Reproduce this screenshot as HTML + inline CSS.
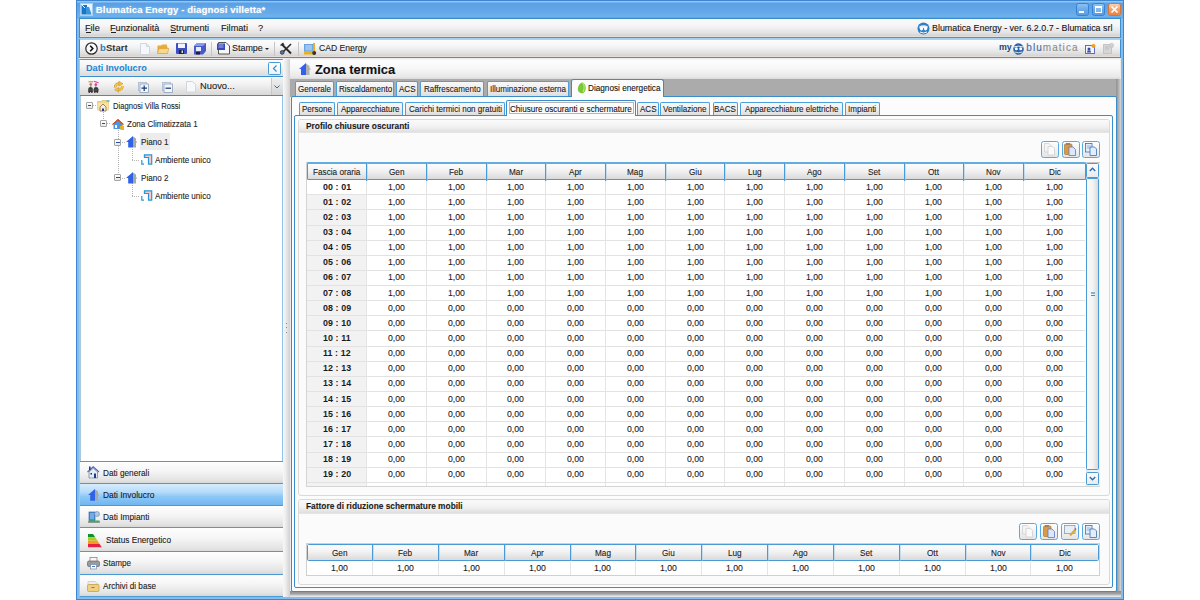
<!DOCTYPE html><html><head><meta charset="utf-8"><style>

*{box-sizing:border-box}
html,body{margin:0;padding:0;width:1200px;height:600px;overflow:hidden;background:#fff;font-family:"Liberation Sans",sans-serif;font-size:9px;color:#1a1a1a}
.ab{position:absolute;overflow:visible}
.t{position:absolute;white-space:nowrap;line-height:1;transform-origin:0 0;-webkit-text-stroke:0.1px currentColor}
.b{font-weight:bold}
.gradw{background:linear-gradient(#fdfdfd,#f3f3f3 45%,#dcdcdc)}

</style></head><body>
<div class="ab" style="left:76px;top:0;width:1048px;height:600px;background:#5fa4e6;border:1px solid #3d86d2"></div>
<div class="ab" style="left:77px;top:1px;width:1046px;height:17px;background:linear-gradient(#92c6f2 0,#92c6f2 1px,#5a9fe5 2px,#66aaea 12px,#70b3ee 16px,#4a94dc 17px)"></div>
<div class="ab" style="left:77px;top:18px;width:1046px;height:581px;background:#84bcee"></div>
<svg class="ab" style="left:80px;top:3px;" width="13" height="13" viewBox="0 0 13 13"><rect x="0.5" y="0.5" width="12" height="12" fill="#eaf3fb" stroke="#a9cdee"/><path d="M1.5 2 L7 2 L7 6 L11.5 11.5 L1.5 11.5 Z" fill="#1677c8"/><path d="M6 4 L9 4 L11.5 11 L6 11 Z" fill="#3a95dc"/><path d="M2 2 L5 5" stroke="#fff" stroke-width="1"/></svg>
<div class="t" style="left:95.85px;top:4.74px;font-size:9.6px;font-weight:bold;color:#fff;transform:scaleX(1.000);text-shadow:0 0 2px #a8d6ff;-webkit-text-stroke:0;letter-spacing:0.1px">Blumatica Energy - diagnosi villetta*</div>
<div class="ab" style="left:1076px;top:3px;width:13.4px;height:13.2px;border:1px solid #3c80d0;border-radius:2.5px;background:linear-gradient(#8cc2f2,#6aaaea 50%,#5a9ce2)"></div>
<div class="ab" style="left:1091.7px;top:3px;width:13.4px;height:13.2px;border:1px solid #3c80d0;border-radius:2.5px;background:linear-gradient(#8cc2f2,#6aaaea 50%,#5a9ce2)"></div>
<div class="ab" style="left:1107.6px;top:3px;width:13.4px;height:13.2px;border:1px solid #d0783c;border-radius:2.5px;background:linear-gradient(#fbd2b0,#f2a068 50%,#ec8440)"></div>
<div class="ab" style="left:1079.2px;top:11.3px;width:5px;height:1.7px;background:#fff"></div>
<div class="ab" style="left:1095px;top:6.1px;width:7px;height:6.8px;border:1px solid #fff;border-top-width:2px;background:rgba(255,255,255,0.15)"></div>
<svg class="ab" style="left:1110px;top:5px;" width="9" height="9" viewBox="0 0 9 9"><path d="M1.5 1.5 L7.5 7.5 M7.5 1.5 L1.5 7.5" stroke="#fff" stroke-width="1.7"/></svg>
<div class="ab" style="left:79px;top:17.7px;width:1042px;height:20.3px;border:1px solid #3a8fd0;border-bottom-color:#4494c8;background:linear-gradient(#fafafa,#f6f6f6 35%,#e4e4e4 75%,#d6d6d6 92%,#ece2dc)"></div>
<div class="t" style="left:85.10px;top:22.68px;font-size:9.5px;color:#151515;transform:scaleX(0.962);">File</div>
<div class="t" style="left:109.80px;top:22.68px;font-size:9.5px;color:#151515;transform:scaleX(0.962);">Funzionalità</div>
<div class="t" style="left:169.90px;top:22.68px;font-size:9.5px;color:#151515;transform:scaleX(0.962);">Strumenti</div>
<div class="t" style="left:220.60px;top:22.68px;font-size:9.5px;color:#151515;transform:scaleX(0.962);">Filmati</div>
<div class="t" style="left:258.40px;top:22.68px;font-size:9.5px;color:#151515;transform:scaleX(0.962);">?</div>
<div class="ab" style="left:86px;top:32.2px;width:4.5px;height:1px;background:#222"></div>
<div class="ab" style="left:111px;top:32.2px;width:5px;height:1px;background:#222"></div>
<div class="ab" style="left:171px;top:32.2px;width:5px;height:1px;background:#222"></div>
<svg class="ab" style="left:917px;top:21.5px;" width="13" height="13" viewBox="0 0 13 13"><circle cx="6.5" cy="6.5" r="6" fill="#2e7fca"/><path d="M2.4 4.2 Q6.5 2.2 10.6 4.2 L10.6 6.5 Q6.5 5.5 2.4 6.5 Z" fill="#fff" opacity="0.9"/><circle cx="4.5" cy="6.8" r="1.6" fill="#fff"/><circle cx="8.5" cy="6.8" r="1.6" fill="#fff"/><path d="M3 10 Q6.5 12 10 10" stroke="#fff" stroke-width="1" fill="none"/></svg>
<div class="t" style="left:932.10px;top:22.93px;font-size:9.5px;color:#151515;transform:scaleX(0.936);">Blumatica Energy - ver. 6.2.0.7 - Blumatica srl</div>
<div class="ab" style="left:79px;top:38px;width:1042px;height:20px;border:1px solid #3e8ed2;border-top:2px solid #a6d2ee;border-bottom-color:#4494c8;background:linear-gradient(#fcfcfc,#f6f6f6 35%,#e2e2e2 75%,#d6d6d6 92%,#ece2dc)"></div>
<svg class="ab" style="left:84.5px;top:41.5px;" width="13" height="13" viewBox="0 0 13 13"><circle cx="6.5" cy="6.5" r="5.7" fill="#fafafa" stroke="#2a2a2a" stroke-width="1.2"/><path d="M5.2 3.8 L7.8 6.5 L5.2 9.2" stroke="#111" stroke-width="1.6" fill="none"/></svg>
<div class="t" style="left:100.10px;top:43.42px;font-size:9.5px;font-weight:bold;color:#333;transform:scaleX(1.000);-webkit-text-stroke:0"><span style="color:#2a7ac6">b</span>Start</div>
<svg class="ab" style="left:140px;top:42.5px;" width="10" height="12" viewBox="0 0 10 12"><path d="M0.5 0.5 L6.5 0.5 L9.5 3.5 L9.5 11.5 L0.5 11.5 Z" fill="#f4f8fc" stroke="#cfd6de"/><path d="M6.5 0.5 L6.5 3.5 L9.5 3.5" fill="#e0e6ee" stroke="#cfd6de"/></svg>
<svg class="ab" style="left:157px;top:43.5px;" width="12" height="10" viewBox="0 0 12 10"><path d="M0.5 1.5 L4 1.5 L5 0.5 L10 0.5 L10 3 L0.5 3 Z" fill="#e8b040"/><path d="M0.5 2.5 L10.5 2.5 L10.5 9.5 L0.5 9.5 Z" fill="#e9a93a"/><path d="M2 4.5 L11.8 4.5 L10.5 9.5 L0.5 9.5 Z" fill="#f8d888" stroke="#d89830" stroke-width="0.6"/></svg>
<svg class="ab" style="left:175.8px;top:43px;" width="11" height="11" viewBox="0 0 11 11"><rect x="0" y="0" width="11" height="11" rx="1" fill="#3d4fc0"/><rect x="2" y="0.5" width="7" height="4.5" fill="#f2f4ff"/><rect x="3" y="7" width="5" height="4" fill="#202040"/><rect x="5.5" y="7.5" width="1.5" height="2.5" fill="#ddd"/></svg>
<svg class="ab" style="left:193.5px;top:42.5px;" width="12" height="12" viewBox="0 0 12 12"><path d="M3 0 L12 0 L12 8 L9 11.5 L0 11.5 L0 3 Z" fill="#4a58c8"/><path d="M3 0 L12 0 L9 3 L0 3 Z" fill="#8a98f0"/><rect x="2" y="4" width="5" height="4" fill="#e8ecff"/><rect x="2" y="9" width="4" height="2.5" fill="#202040"/></svg>
<div class="ab" style="left:210.5px;top:42px;width:1px;height:14px;background:#c4c4c4"></div>
<svg class="ab" style="left:217px;top:42.3px;" width="13" height="12.5" viewBox="0 0 13 12.5"><path d="M1.5 0.5 L9 0.5 L12.5 4 L12.5 12 L1.5 12 Z" fill="#f8f8f8" stroke="#555" stroke-width="1"/><rect x="0" y="1.5" width="8" height="6.5" fill="#3848b8"/><path d="M1.5 3 L6.5 3 M1.5 5 L6.5 5" stroke="#c8d0f8" stroke-width="0.8"/></svg>
<div class="t" style="left:232.10px;top:43.33px;font-size:9.5px;color:#1a1a1a;transform:scaleX(0.941);">Stampe</div>
<div class="ab" style="left:265px;top:47.8px;width:0;height:0;border-left:2px solid transparent;border-right:2px solid transparent;border-top:2.5px solid #222"></div>
<div class="ab" style="left:273.5px;top:42px;width:1px;height:14px;background:#c4c4c4"></div>
<svg class="ab" style="left:279.5px;top:43px;" width="12.5" height="11.5" viewBox="0 0 12.5 11.5"><path d="M1.5 1 L11 10.5" stroke="#2a2a2a" stroke-width="2"/><path d="M11 1 L2 10" stroke="#2a2a2a" stroke-width="1.6"/><circle cx="2.2" cy="9.4" r="1.9" fill="#4a7ab0" stroke="#222" stroke-width="0.7"/><path d="M0.5 2.5 L3 0.5 L4 2" stroke="#333" stroke-width="1.2" fill="none"/></svg>
<div class="ab" style="left:297.5px;top:42px;width:1px;height:14px;background:#c4c4c4"></div>
<svg class="ab" style="left:303.8px;top:42.5px;" width="12.5" height="12" viewBox="0 0 12.5 12"><rect x="0" y="1" width="9.5" height="8" fill="#6aa2e0"/><rect x="1.2" y="2" width="7" height="5.5" fill="#9cc4ee"/><rect x="0" y="8" width="9.5" height="3.5" fill="#e8b020"/><rect x="9" y="0" width="2" height="9" fill="#e8b020"/><circle cx="10.2" cy="10" r="2" fill="#333"/></svg>
<div class="t" style="left:319.30px;top:43.33px;font-size:9.5px;color:#1a1a1a;transform:scaleX(0.906);">CAD Energy</div>
<div class="t" style="left:998.90px;top:43.30px;font-size:9.3px;font-weight:bold;color:#24487e;transform:scaleX(0.949);-webkit-text-stroke:0">my</div>
<svg class="ab" style="left:1012.8px;top:42.5px;" width="11" height="12" viewBox="0 0 11 12"><ellipse cx="5.5" cy="6" rx="5.3" ry="5.8" fill="#2a62a8"/><circle cx="3.3" cy="5.8" r="1.5" fill="#fff"/><circle cx="7.7" cy="5.8" r="1.5" fill="#fff"/><path d="M0.5 4 Q5.5 2.3 10.5 4" stroke="#fff" stroke-width="0.9" fill="none"/><path d="M1.5 9 Q5.5 10.5 9.5 9" stroke="#fff" stroke-width="0.8" fill="none"/></svg>
<div class="t" style="left:1026.3px;top:42.8px;font-size:10px;line-height:10px;color:#3a6aa6;letter-spacing:1.05px;-webkit-text-stroke:0.1px currentColor">blu<span style="color:#8c8c8c">matica</span></div>
<svg class="ab" style="left:1085px;top:43.5px;" width="11" height="10" viewBox="0 0 11 10"><rect x="0.5" y="1.5" width="9" height="8" fill="#f0f4fc" stroke="#5a70b8"/><circle cx="4" cy="5" r="1.5" fill="#3a4aa0"/><path d="M2 8.5 L6 8.5 L5.5 6.5 L2.5 6.5 Z" fill="#3a4aa0"/><circle cx="8.5" cy="2" r="2" fill="#f0a020"/></svg>
<svg class="ab" style="left:1103.3px;top:43px;" width="11" height="11" viewBox="0 0 11 11"><rect x="0.5" y="1.5" width="8" height="9" fill="#d6d6d6" stroke="#c4c4c4"/><circle cx="8.5" cy="2.5" r="2.2" fill="#d0d0d0" stroke="#bbb" stroke-width="0.5"/><path d="M2 4 L6 4 M2 6 L6 6" stroke="#bbb"/></svg>
<div class="ab" style="left:79px;top:58px;width:1042px;height:539px;background:#ececec"></div>
<div class="ab" style="left:78.5px;top:58.8px;width:204.7px;height:538px;background:#fff;border:1px solid #4a9ad6;border-left:2px solid #a8c8e0;border-right-color:#8ec4ec"></div>
<div class="ab" style="left:80px;top:59.6px;width:202.5px;height:17px;background:linear-gradient(#fcfcfc,#f4f4f4 40%,#dcdcdc 95%,#e8e0dc);border-bottom:1px solid #3a8fd0"></div>
<div class="t" style="left:85.60px;top:63.89px;font-size:9.3px;font-weight:bold;color:#2486d4;transform:scaleX(0.981);-webkit-text-stroke:0.05px currentColor">Dati Involucro</div>
<div class="ab" style="left:267.5px;top:61.5px;width:13.5px;height:13px;border:1px solid #4a9ad6;border-radius:1.5px;background:linear-gradient(#fdfdfd,#eef2f6)"></div>
<svg class="ab" style="left:271.5px;top:64.5px;" width="6" height="7" viewBox="0 0 6 7"><path d="M4.5 0.5 L1.5 3.5 L4.5 6.5" stroke="#3a8ad0" stroke-width="1.2" fill="none"/></svg>
<div class="ab" style="left:80px;top:77px;width:202.5px;height:18.5px;background:linear-gradient(#fdfdfd,#f2f2f2 40%,#dadada 95%);border-bottom:1px solid #3a8fd0"></div>
<div class="ab" style="left:271px;top:77.5px;width:11.5px;height:17px;background:linear-gradient(#f0f0f0,#d4d4d4);border-left:1px solid #c0c8d0"></div>
<svg class="ab" style="left:274px;top:84.5px;" width="6" height="4" viewBox="0 0 6 4"><path d="M0.5 0.5 L3 3 L5.5 0.5" stroke="#3a6aa0" stroke-width="1" fill="none"/></svg>
<svg class="ab" style="left:88px;top:80.5px;" width="11" height="12" viewBox="0 0 11 12"><path d="M0.5 0.8 L5 0.8" stroke="#f07a30" stroke-width="1.1"/><path d="M5.8 0.3 L10.5 1.8" stroke="#e8389a" stroke-width="1.1"/><circle cx="2.8" cy="3.3" r="1.3" fill="#f07a30"/><circle cx="7.8" cy="3.6" r="1.3" fill="#e8389a"/><path d="M2.8 3 L2.8 6 M7.8 3 L7.8 6" stroke="#777" stroke-width="0.8"/><path d="M0.3 11 L0.3 7.8 Q0.3 6 2.5 6 Q4.8 6 4.8 7.8 L4.8 11 M5.8 11 L5.8 7.8 Q5.8 6 8 6 Q10.3 6 10.3 7.8 L10.3 11" fill="#3a3a3a"/><path d="M0 9 L11 9" stroke="#555" stroke-width="1"/><circle cx="1.3" cy="11" r="0.9" fill="#333"/><circle cx="3.8" cy="11" r="0.9" fill="#333"/><circle cx="6.8" cy="11" r="0.9" fill="#333"/><circle cx="9.3" cy="11" r="0.9" fill="#333"/></svg>
<svg class="ab" style="left:113px;top:81px;" width="11.5" height="11.5" viewBox="0 0 11.5 11.5"><path d="M2.2 6.5 Q2 2.8 6.2 2.6" stroke="#c8901a" stroke-width="2.6" fill="none"/><path d="M2.2 6.5 Q2 2.8 6.2 2.6" stroke="#f4c84a" stroke-width="1.6" fill="none"/><path d="M5.8 0.2 L10 2.8 L5.8 5.2 Z" fill="#f0c040" stroke="#c8901a" stroke-width="0.5"/><path d="M9.3 5 Q9.5 8.7 5.3 8.9" stroke="#c8901a" stroke-width="2.6" fill="none"/><path d="M9.3 5 Q9.5 8.7 5.3 8.9" stroke="#f4c84a" stroke-width="1.6" fill="none"/><path d="M5.7 6.3 L1.5 8.7 L5.7 11.3 Z" fill="#f0c040" stroke="#c8901a" stroke-width="0.5"/></svg>
<svg class="ab" style="left:137.5px;top:81.5px;" width="11" height="11" viewBox="0 0 11 11"><rect x="0.5" y="0.5" width="8" height="8" fill="#e0e8f4" stroke="#a8b8d0" stroke-width="0.8"/><rect x="2" y="2" width="8.5" height="8.5" fill="#f2f6fb" stroke="#8aa0c0" stroke-width="0.8"/><path d="M6.2 3.5 L6.2 9 M3.5 6.2 L9 6.2" stroke="#1a3a6a" stroke-width="1.2"/></svg>
<svg class="ab" style="left:161.5px;top:81.5px;" width="11" height="11" viewBox="0 0 11 11"><rect x="0.5" y="0.5" width="8" height="8" fill="#e0e8f4" stroke="#a8b8d0" stroke-width="0.8"/><rect x="2" y="2" width="8.5" height="8.5" fill="#f2f6fb" stroke="#8aa0c0" stroke-width="0.8"/><path d="M3.5 6.2 L9 6.2" stroke="#1a3a6a" stroke-width="1.2"/></svg>
<svg class="ab" style="left:186px;top:81px;" width="10" height="12" viewBox="0 0 10 12"><path d="M0.5 0.5 L6.5 0.5 L9.5 3.5 L9.5 11 L0.5 11 Z" fill="#f6f9fc" stroke="#d0d6de"/></svg>
<div class="t" style="left:199.80px;top:80.67px;font-size:9.8px;color:#1a1a1a;transform:scaleX(0.954);">Nuovo...</div>
<div class="ab" style="left:103px;top:110px;width:1px;height:9px;background:repeating-linear-gradient(#b4b4b4 0 1px,transparent 1px 2px)"></div>
<div class="ab" style="left:118px;top:128px;width:1px;height:49px;background:repeating-linear-gradient(#b4b4b4 0 1px,transparent 1px 2px)"></div>
<div class="ab" style="left:132px;top:149px;width:1px;height:11px;background:repeating-linear-gradient(#b4b4b4 0 1px,transparent 1px 2px)"></div>
<div class="ab" style="left:132px;top:160px;width:8px;height:1px;background:repeating-linear-gradient(90deg,#b4b4b4 0 1px,transparent 1px 2px)"></div>
<div class="ab" style="left:132px;top:181px;width:1px;height:15px;background:repeating-linear-gradient(#b4b4b4 0 1px,transparent 1px 2px)"></div>
<div class="ab" style="left:132px;top:196px;width:8px;height:1px;background:repeating-linear-gradient(90deg,#b4b4b4 0 1px,transparent 1px 2px)"></div>
<div class="ab" style="left:93px;top:105px;width:4px;height:1px;background:repeating-linear-gradient(90deg,#b4b4b4 0 1px,transparent 1px 2px)"></div>
<div class="ab" style="left:107px;top:123px;width:4px;height:1px;background:repeating-linear-gradient(90deg,#b4b4b4 0 1px,transparent 1px 2px)"></div>
<div class="ab" style="left:122px;top:141.5px;width:4px;height:1px;background:repeating-linear-gradient(90deg,#b4b4b4 0 1px,transparent 1px 2px)"></div>
<div class="ab" style="left:122px;top:177.5px;width:4px;height:1px;background:repeating-linear-gradient(90deg,#b4b4b4 0 1px,transparent 1px 2px)"></div>
<div class="ab" style="left:85.9px;top:101.7px;width:7px;height:7px;border:1px solid #a4a4a4;border-radius:1px;background:linear-gradient(#fff,#e8e8e8)"></div><div class="ab" style="left:87.60000000000001px;top:104.7px;width:3.6px;height:1.2px;background:#2a4a9a"></div>
<div class="ab" style="left:99.9px;top:119.8px;width:7px;height:7px;border:1px solid #a4a4a4;border-radius:1px;background:linear-gradient(#fff,#e8e8e8)"></div><div class="ab" style="left:101.60000000000001px;top:122.8px;width:3.6px;height:1.2px;background:#2a4a9a"></div>
<div class="ab" style="left:114.4px;top:138.5px;width:7px;height:7px;border:1px solid #a4a4a4;border-radius:1px;background:linear-gradient(#fff,#e8e8e8)"></div><div class="ab" style="left:116.10000000000001px;top:141.5px;width:3.6px;height:1.2px;background:#2a4a9a"></div>
<div class="ab" style="left:114.4px;top:174.3px;width:7px;height:7px;border:1px solid #a4a4a4;border-radius:1px;background:linear-gradient(#fff,#e8e8e8)"></div><div class="ab" style="left:116.10000000000001px;top:177.3px;width:3.6px;height:1.2px;background:#2a4a9a"></div>
<svg class="ab" style="left:96.8px;top:100px;" width="12.5" height="11.5" viewBox="0 0 12.5 11.5"><path d="M0.5 1.5 L4 1.5 L5 0.5 L11.5 0.5 L11.5 10 L0.5 10 Z" fill="#f0d890" stroke="#d8b060" stroke-width="0.6"/><path d="M0.5 3 L11.5 3 L11.5 10 L0.5 10 Z" fill="#f6e2a6"/><rect x="9.5" y="0" width="3" height="2" fill="#6ac8c8"/><path d="M3 7 L6 4 L9 7 L9 11 L3 11 Z" fill="#f4f0e0" stroke="#8a6a30" stroke-width="0.8"/><rect x="5" y="8.5" width="2" height="2.5" fill="#2a3a8a"/></svg>
<svg class="ab" style="left:111.7px;top:117.6px;" width="12" height="12" viewBox="0 0 12 12"><path d="M0.5 6 L6 1 L11.5 6" fill="#d84a1a"/><path d="M1.5 6 L6 2 L10.5 6 L10.5 11 L1.5 11 Z" fill="#4a98e0"/><path d="M0 6.5 L6 1 L12 6.5 L11 7 L6 2.5 L1 7 Z" fill="#d84a1a"/><rect x="3" y="7" width="2" height="3" fill="#fff"/><path d="M8 8 L12 8 L12 12 L8.5 12 Z" fill="#f0b020"/></svg>
<svg class="ab" style="left:126px;top:135.6px;" width="11.5" height="11.5" viewBox="0 0 11.5 11.5"><path d="M7 0 L7 11.5 L2.2 11.5 L2.2 6 L0 6 Z" fill="#2f62e6"/><path d="M7 0.5 L10 2.5 L10 5 L11.3 6 L10 7 L10 11.5 L7 11.5 Z" fill="#a8a8a8"/></svg>
<svg class="ab" style="left:126px;top:171.8px;" width="11.5" height="11.5" viewBox="0 0 11.5 11.5"><path d="M7 0 L7 11.5 L2.2 11.5 L2.2 6 L0 6 Z" fill="#2f62e6"/><path d="M7 0.5 L10 2.5 L10 5 L11.3 6 L10 7 L10 11.5 L7 11.5 Z" fill="#a8a8a8"/></svg>
<svg class="ab" style="left:140.6px;top:154.2px;" width="11.5" height="11" viewBox="0 0 11.5 11"><path d="M3.5 0.8 L10.7 0.8 L10.7 10.2 L7.5 10.2 L7.5 3.5 L3.5 3.5 Z" fill="#f2cccc" stroke="#2a98d8" stroke-width="1.2"/><path d="M3.5 0.8 L3.5 3.5 M0.8 6 L0.8 10.2 L3 10.2" stroke="#2a98d8" stroke-width="1.2" fill="none"/></svg>
<svg class="ab" style="left:140.6px;top:190.2px;" width="11.5" height="11" viewBox="0 0 11.5 11"><path d="M3.5 0.8 L10.7 0.8 L10.7 10.2 L7.5 10.2 L7.5 3.5 L3.5 3.5 Z" fill="#f2cccc" stroke="#2a98d8" stroke-width="1.2"/><path d="M3.5 0.8 L3.5 3.5 M0.8 6 L0.8 10.2 L3 10.2" stroke="#2a98d8" stroke-width="1.2" fill="none"/></svg>
<div class="ab" style="left:140px;top:132.5px;width:29.5px;height:17.5px;background:#ececec"></div>
<div class="t" style="left:112.60px;top:101.53px;font-size:8.9px;color:#1e1e1e;transform:scaleX(0.860);">Diagnosi Villa Rossi</div>
<div class="t" style="left:126.60px;top:119.53px;font-size:8.9px;color:#1e1e1e;transform:scaleX(0.900);">Zona Climatizzata 1</div>
<div class="t" style="left:141.10px;top:137.73px;font-size:8.9px;color:#1e1e1e;transform:scaleX(0.911);">Piano 1</div>
<div class="t" style="left:155.40px;top:155.73px;font-size:8.9px;color:#1e1e1e;transform:scaleX(0.910);">Ambiente unico</div>
<div class="t" style="left:141.10px;top:173.84px;font-size:8.9px;color:#1e1e1e;transform:scaleX(0.911);">Piano 2</div>
<div class="t" style="left:155.40px;top:191.94px;font-size:8.9px;color:#1e1e1e;transform:scaleX(0.910);">Ambiente unico</div>
<div class="ab" style="left:80px;top:460.8px;width:202.5px;height:22.69999999999999px;background:linear-gradient(#fefefe,#f6f6f6 40%,#e4e4e4 85%,#d8d8d8);border-top:1.2px solid #4a9ad6"></div>
<div class="t" style="left:103.30px;top:468.95px;font-size:9px;color:#1a1a1a;transform:scaleX(0.916);">Dati generali</div>
<div class="ab" style="left:80px;top:483.0px;width:202.5px;height:22.30000000000001px;background:linear-gradient(#d6ecfd,#b4dafa 40%,#8cc8f6 60%,#70b6f0);border-top:1.2px solid #4a9ad6"></div>
<div class="t" style="left:103.30px;top:490.95px;font-size:9px;color:#1a1a1a;transform:scaleX(0.934);">Dati Involucro</div>
<div class="ab" style="left:80px;top:504.8px;width:202.5px;height:22.69999999999999px;background:linear-gradient(#fefefe,#f6f6f6 40%,#e4e4e4 85%,#d8d8d8);border-top:1.2px solid #4a9ad6"></div>
<div class="t" style="left:103.30px;top:512.85px;font-size:9px;color:#1a1a1a;transform:scaleX(0.926);">Dati Impianti</div>
<div class="ab" style="left:80px;top:527.0px;width:202.5px;height:24.899999999999977px;background:linear-gradient(#fefefe,#f6f6f6 40%,#e4e4e4 85%,#d8d8d8);border-top:1.2px solid #4a9ad6"></div>
<div class="t" style="left:106.20px;top:536.15px;font-size:9px;color:#1a1a1a;transform:scaleX(0.915);">Status Energetico</div>
<div class="ab" style="left:80px;top:551.4px;width:202.5px;height:22.700000000000045px;background:linear-gradient(#fefefe,#f6f6f6 40%,#e4e4e4 85%,#d8d8d8);border-top:1.2px solid #4a9ad6"></div>
<div class="t" style="left:103.30px;top:559.45px;font-size:9px;color:#1a1a1a;transform:scaleX(0.900);">Stampe</div>
<div class="ab" style="left:80px;top:573.6px;width:202.5px;height:22.699999999999932px;background:linear-gradient(#fefefe,#f6f6f6 40%,#e4e4e4 85%,#d8d8d8);border-top:1.2px solid #4a9ad6"></div>
<div class="t" style="left:103.30px;top:581.65px;font-size:9px;color:#1a1a1a;transform:scaleX(0.906);">Archivi di base</div>
<div class="ab" style="left:80px;top:596px;width:202.5px;height:1px;background:#4a9ad6"></div>
<svg class="ab" style="left:87px;top:466.4px;" width="12.5" height="12.5" viewBox="0 0 12.5 12.5"><path d="M0.5 6 L6.2 0.8 L12 6" stroke="#4a6ab8" stroke-width="1.2" fill="none"/><path d="M2 6 L6.2 2.2 L10.5 6 L10.5 12 L2 12 Z" fill="#e6ecf4" stroke="#6a7a98" stroke-width="0.7"/><rect x="2" y="0.5" width="1.6" height="3.5" fill="#2a3a8a"/><rect x="7" y="7.5" width="2" height="4.5" fill="#1a3a8a"/><rect x="3.5" y="7" width="1.5" height="1.5" fill="#1a2a6a"/></svg>
<svg class="ab" style="left:87.6px;top:488.6px;" width="11.5" height="11.8" viewBox="0 0 11.5 11.8"><path d="M7 0 L7 11.8 L2.2 11.8 L2.2 6 L0 6 Z" fill="#2f62e6"/><path d="M7 0.5 L10 2.5 L10 5 L11.3 6 L10 7 L10 11.8 L7 11.8 Z" fill="#a8a8a8"/></svg>
<svg class="ab" style="left:87.5px;top:511px;" width="12" height="12" viewBox="0 0 12 12"><rect x="1" y="1" width="6" height="8.5" fill="#4a90d8" stroke="#2a5aa0" stroke-width="0.6"/><path d="M2 3 L6 3 M2 5 L6 5 M2 7 L6 7" stroke="#c8e0f8" stroke-width="0.7"/><circle cx="9" cy="3" r="2.5" fill="#b0c8e0" stroke="#6a88b0" stroke-width="0.6"/><rect x="0.5" y="9.5" width="11" height="2" fill="#30b050"/><rect x="0" y="10.5" width="12" height="1.2" fill="#888"/></svg>
<svg class="ab" style="left:88px;top:533.7px;" width="14" height="13.3" viewBox="0 0 14 13.3"><path d="M0 0 L5 0 L7.2 3.3 L0 3.3 Z" fill="#109030"/><path d="M0 3.3 L7.2 3.3 L9.4 6.6 L0 6.6 Z" fill="#a8d020"/><path d="M0 6.6 L9.4 6.6 L11.6 9.9 L0 9.9 Z" fill="#f0a020"/><path d="M0 9.9 L11.6 9.9 L13.8 13.3 L0 13.3 Z" fill="#e82040"/></svg>
<svg class="ab" style="left:86.9px;top:556.9px;" width="13" height="12.5" viewBox="0 0 13 12.5"><rect x="3" y="0.5" width="7" height="4" fill="#f8f8f8" stroke="#888" stroke-width="0.8"/><rect x="0.5" y="4" width="12" height="5.5" rx="1.5" fill="#9a9a9a" stroke="#666" stroke-width="0.7"/><rect x="3.5" y="7.5" width="6" height="4.5" fill="#fafafa" stroke="#7a8aa8" stroke-width="0.7"/><rect x="5" y="9" width="3" height="1" fill="#4a7ac0"/></svg>
<svg class="ab" style="left:87.2px;top:580.5px;" width="12.5" height="11" viewBox="0 0 12.5 11"><path d="M1 0.5 L8 0.5 L11 3 L11 4 L1 4 Z" fill="#e8eef4" stroke="#b8c0c8" stroke-width="0.6"/><rect x="0.5" y="3.5" width="11.5" height="7" rx="1" fill="#f0d080" stroke="#c8a050" stroke-width="0.8"/><rect x="4.5" y="6" width="3" height="1" fill="#a07830"/></svg>
<div class="ab" style="left:283.3px;top:59px;width:6.8px;height:538px;background:linear-gradient(90deg,#f8f8f8,#ececec 40%,#d0d0d0)"></div>
<div class="ab" style="left:285.8px;top:322.5px;width:1.3px;height:1.3px;background:#8a8a8a"></div>
<div class="ab" style="left:285.8px;top:327px;width:1.3px;height:1.3px;background:#8a8a8a"></div>
<div class="ab" style="left:285.8px;top:331.5px;width:1.3px;height:1.3px;background:#8a8a8a"></div>
<div class="ab" style="left:290px;top:59px;width:830px;height:20px;background:linear-gradient(#f0ecea 0,#fdfdfd 1px,#f6f6f6 50%,#e8e8e8 90%,#d8d8d8)"></div>
<svg class="ab" style="left:299px;top:62.8px;" width="12.5" height="12.2" viewBox="0 0 12.5 12.2"><path d="M7 0 L7 12 L2 12 L2 6 L0 6 Z" fill="#3060f0"/><path d="M7 0.5 L10.5 3 L10.5 5 L12 6 L10.5 7 L10.5 12 L7 12 Z" fill="#b0b0b0"/></svg>
<div class="t" style="left:314.60px;top:62.95px;font-size:13px;font-weight:bold;color:#111;transform:scaleX(0.990);">Zona termica</div>
<div class="ab" style="left:290px;top:79px;width:830px;height:18px;background:#ababab"></div>
<div class="ab" style="left:1116px;top:79px;width:5px;height:517px;background:linear-gradient(90deg,#909090,#a8a8a8 40%,#c8c8c8 80%,#d8d8d8)"></div>
<div class="ab" style="left:290px;top:591px;width:831px;height:6px;background:linear-gradient(#8a8a8a,#a4a4a4 50%,#dcdcdc 80%,#ececec)"></div>
<div class="ab" style="left:290.5px;top:95.6px;width:826px;height:496.2px;background:#fcfcfc;border:1.3px solid #3a8cca;border-radius:2px"></div>
<div class="ab" style="left:295.4px;top:81.2px;width:39.0px;height:14.6px;background:linear-gradient(#f8f8f8,#eeeeee 50%,#dedede);border:1.2px solid #4aa0dc;border-bottom:none;border-radius:2px 2px 0 0"></div>
<div class="t" style="left:298.35px;top:84.50px;font-size:9.3px;color:#1a1a1a;transform:scaleX(0.865);">Generale</div>
<div class="ab" style="left:336.2px;top:81.2px;width:58.19999999999999px;height:14.6px;background:linear-gradient(#f8f8f8,#eeeeee 50%,#dedede);border:1.2px solid #4aa0dc;border-bottom:none;border-radius:2px 2px 0 0"></div>
<div class="t" style="left:338.70px;top:84.50px;font-size:9.3px;color:#1a1a1a;transform:scaleX(0.865);">Riscaldamento</div>
<div class="ab" style="left:396.2px;top:81.2px;width:22.19999999999999px;height:14.6px;background:linear-gradient(#f8f8f8,#eeeeee 50%,#dedede);border:1.2px solid #4aa0dc;border-bottom:none;border-radius:2px 2px 0 0"></div>
<div class="t" style="left:399.03px;top:84.50px;font-size:9.3px;color:#1a1a1a;transform:scaleX(0.865);">ACS</div>
<div class="ab" style="left:420.2px;top:81.2px;width:63.80000000000001px;height:14.6px;background:linear-gradient(#f8f8f8,#eeeeee 50%,#dedede);border:1.2px solid #4aa0dc;border-bottom:none;border-radius:2px 2px 0 0"></div>
<div class="t" style="left:423.78px;top:84.50px;font-size:9.3px;color:#1a1a1a;transform:scaleX(0.865);">Raffrescamento</div>
<div class="ab" style="left:486.5px;top:81.2px;width:82.79999999999995px;height:14.6px;background:linear-gradient(#f8f8f8,#eeeeee 50%,#dedede);border:1.2px solid #4aa0dc;border-bottom:none;border-radius:2px 2px 0 0"></div>
<div class="t" style="left:489.89px;top:84.50px;font-size:9.3px;color:#1a1a1a;transform:scaleX(0.865);">Illuminazione esterna</div>
<div class="ab" style="left:570.8px;top:78.6px;width:93.6px;height:18.6px;background:#fcfcfc;border:1.3px solid #3a8cca;border-bottom:none;border-radius:2.5px 2.5px 0 0"></div>
<svg class="ab" style="left:576.5px;top:81.8px;" width="10" height="12" viewBox="0 0 10 12"><path d="M5 0.5 C9.5 1.5 10 8 6.5 11 C3.5 12 0.5 10 0.8 6.5 C1.2 3 3 1 5 0.5 Z" fill="#7cc83a"/><path d="M5 0.5 C7.5 2 8 6 6 10" stroke="#b6e878" stroke-width="1.2" fill="none"/></svg>
<div class="t" style="left:587.90px;top:84.00px;font-size:9.3px;color:#111;transform:scaleX(0.882);">Diagnosi energetica</div>
<div class="ab" style="left:294px;top:114.8px;width:818.5px;height:473.5px;background:#fcfcfc;border:1.3px solid #3a8cca;border-radius:2px"></div>
<div class="ab" style="left:299.3px;top:102px;width:36.0px;height:13px;background:linear-gradient(#f8f8f8,#eeeeee 50%,#dedede);border:1.2px solid #4aa0dc;border-bottom:none;border-radius:2px 2px 0 0"></div>
<div class="t" style="left:302.32px;top:104.69px;font-size:9.3px;color:#1a1a1a;transform:scaleX(0.865);">Persone</div>
<div class="ab" style="left:337.3px;top:102px;width:65.39999999999998px;height:13px;background:linear-gradient(#f8f8f8,#eeeeee 50%,#dedede);border:1.2px solid #4aa0dc;border-bottom:none;border-radius:2px 2px 0 0"></div>
<div class="t" style="left:340.71px;top:104.69px;font-size:9.3px;color:#1a1a1a;transform:scaleX(0.865);">Apparecchiature</div>
<div class="ab" style="left:405px;top:102px;width:100px;height:13px;background:linear-gradient(#f8f8f8,#eeeeee 50%,#dedede);border:1.2px solid #4aa0dc;border-bottom:none;border-radius:2px 2px 0 0"></div>
<div class="t" style="left:408.51px;top:104.69px;font-size:9.3px;color:#1a1a1a;transform:scaleX(0.865);">Carichi termici non gratuiti</div>
<div class="ab" style="left:636.7px;top:102px;width:22.299999999999955px;height:13px;background:linear-gradient(#f8f8f8,#eeeeee 50%,#dedede);border:1.2px solid #4aa0dc;border-bottom:none;border-radius:2px 2px 0 0"></div>
<div class="t" style="left:639.58px;top:104.69px;font-size:9.3px;color:#1a1a1a;transform:scaleX(0.865);">ACS</div>
<div class="ab" style="left:660px;top:102px;width:50.200000000000045px;height:13px;background:linear-gradient(#f8f8f8,#eeeeee 50%,#dedede);border:1.2px solid #4aa0dc;border-bottom:none;border-radius:2px 2px 0 0"></div>
<div class="t" style="left:663.41px;top:104.69px;font-size:9.3px;color:#1a1a1a;transform:scaleX(0.865);">Ventilazione</div>
<div class="ab" style="left:712.5px;top:102px;width:25.200000000000045px;height:13px;background:linear-gradient(#f8f8f8,#eeeeee 50%,#dedede);border:1.2px solid #4aa0dc;border-bottom:none;border-radius:2px 2px 0 0"></div>
<div class="t" style="left:714.15px;top:104.69px;font-size:9.3px;color:#1a1a1a;transform:scaleX(0.865);">BACS</div>
<div class="ab" style="left:740px;top:102px;width:102.60000000000002px;height:13px;background:linear-gradient(#f8f8f8,#eeeeee 50%,#dedede);border:1.2px solid #4aa0dc;border-bottom:none;border-radius:2px 2px 0 0"></div>
<div class="t" style="left:744.57px;top:104.69px;font-size:9.3px;color:#1a1a1a;transform:scaleX(0.865);">Apparecchiature elettriche</div>
<div class="ab" style="left:844.5px;top:102px;width:35.10000000000002px;height:13px;background:linear-gradient(#f8f8f8,#eeeeee 50%,#dedede);border:1.2px solid #4aa0dc;border-bottom:none;border-radius:2px 2px 0 0"></div>
<div class="t" style="left:847.97px;top:104.69px;font-size:9.3px;color:#1a1a1a;transform:scaleX(0.865);">Impianti</div>
<div class="ab" style="left:506.3px;top:100px;width:129.5px;height:15.6px;background:#fcfcfc;border:1.3px solid #3a8cca;border-bottom:none;border-radius:2px 2px 0 0"></div>
<svg class="ab" style="left:509px;top:102px" width="125" height="12" viewBox="0 0 125 12"><rect x="0.5" y="0.5" width="124" height="11" fill="none" stroke="#555" stroke-width="1" stroke-dasharray="1 1" opacity="0.85"/></svg>
<div class="t" style="left:510.40px;top:104.69px;font-size:9.3px;color:#111;transform:scaleX(0.872);">Chiusure oscuranti e schermature</div>
<div class="ab" style="left:297.6px;top:118.6px;width:812.4px;height:377.70000000000005px;background:#fbfbfb;border:1px solid #dadada;border-radius:3px"></div>
<div class="ab" style="left:298.6px;top:119.6px;width:810.4px;height:13.5px;background:linear-gradient(#fafafa,#f2f2f2 50%,#e0e0e0 90%,#e8e8e8);border-radius:2px 2px 0 0"></div>
<div class="t" style="left:306.10px;top:121.55px;font-size:9px;font-weight:bold;color:#1a1a1a;transform:scaleX(0.927);">Profilo chiusure oscuranti</div>
<div class="ab" style="left:297.6px;top:499.2px;width:812.4px;height:86.09999999999997px;background:#fbfbfb;border:1px solid #dadada;border-radius:3px"></div>
<div class="ab" style="left:298.6px;top:500.2px;width:810.4px;height:13.5px;background:linear-gradient(#fafafa,#f2f2f2 50%,#e0e0e0 90%,#e8e8e8);border-radius:2px 2px 0 0"></div>
<div class="t" style="left:306.10px;top:502.15px;font-size:9px;font-weight:bold;color:#1a1a1a;transform:scaleX(0.927);">Fattore di riduzione schermature mobili</div>
<div class="ab" style="left:1040.8px;top:141.3px;width:18px;height:16.8px;border:1.5px solid #5aaae0;border-radius:2.5px;background:linear-gradient(#fdfdfd,#f0f0f0 60%,#e4e4e4)"></div>
<svg class="ab" style="left:1043.8px;top:143.3px;" width="12" height="13" viewBox="0 0 12 13"><path d="M0.5 0.5 L5 0.5 L7 2.5 L7 9 L0.5 9 Z" fill="#f4f4f4" stroke="#cfcfcf" stroke-width="0.8"/><path d="M4 3.5 L8.5 3.5 L10.5 5.5 L10.5 12 L4 12 Z" fill="#fafafa" stroke="#cfcfcf" stroke-width="0.8"/></svg>
<div class="ab" style="left:1061.6px;top:141.3px;width:18px;height:16.8px;border:1.5px solid #5aaae0;border-radius:2.5px;background:linear-gradient(#fdfdfd,#f0f0f0 60%,#e4e4e4)"></div>
<svg class="ab" style="left:1064.1px;top:143.3px;" width="13" height="13" viewBox="0 0 13 13"><rect x="0.5" y="1" width="7.5" height="10.5" rx="1" fill="#d89a48" stroke="#b07830" stroke-width="0.7"/><rect x="2" y="0" width="4" height="2" fill="#a08060"/><path d="M5 4 L9 4 L11.5 6.5 L11.5 12.5 L5 12.5 Z" fill="#dce8fa" stroke="#5a7ac8" stroke-width="0.8"/></svg>
<div class="ab" style="left:1082.4px;top:141.3px;width:18px;height:16.8px;border:1.5px solid #5aaae0;border-radius:2.5px;background:linear-gradient(#fdfdfd,#f0f0f0 60%,#e4e4e4)"></div>
<svg class="ab" style="left:1084.9px;top:143.3px;" width="13" height="13" viewBox="0 0 13 13"><rect x="0.5" y="0.5" width="6.5" height="8.5" fill="#e4eefa" stroke="#3a70b8" stroke-width="0.8"/><path d="M1.8 3 L5.5 3 M1.8 5 L5.5 5" stroke="#6a98d0" stroke-width="0.7"/><path d="M5 4 L9.5 4 L11.5 6 L11.5 12.5 L5 12.5 Z" fill="#e4eefa" stroke="#3a70b8" stroke-width="0.8"/></svg>
<div class="ab" style="left:1019px;top:522.9px;width:18px;height:16.8px;border:1.5px solid #5aaae0;border-radius:2.5px;background:linear-gradient(#fdfdfd,#f0f0f0 60%,#e4e4e4)"></div>
<svg class="ab" style="left:1022px;top:524.9px;" width="12" height="13" viewBox="0 0 12 13"><path d="M0.5 0.5 L5 0.5 L7 2.5 L7 9 L0.5 9 Z" fill="#f4f4f4" stroke="#cfcfcf" stroke-width="0.8"/><path d="M4 3.5 L8.5 3.5 L10.5 5.5 L10.5 12 L4 12 Z" fill="#fafafa" stroke="#cfcfcf" stroke-width="0.8"/></svg>
<div class="ab" style="left:1040px;top:522.9px;width:18px;height:16.8px;border:1.5px solid #5aaae0;border-radius:2.5px;background:linear-gradient(#fdfdfd,#f0f0f0 60%,#e4e4e4)"></div>
<svg class="ab" style="left:1042.5px;top:524.9px;" width="13" height="13" viewBox="0 0 13 13"><rect x="0.5" y="1" width="7.5" height="10.5" rx="1" fill="#d89a48" stroke="#b07830" stroke-width="0.7"/><rect x="2" y="0" width="4" height="2" fill="#a08060"/><path d="M5 4 L9 4 L11.5 6.5 L11.5 12.5 L5 12.5 Z" fill="#dce8fa" stroke="#5a7ac8" stroke-width="0.8"/></svg>
<div class="ab" style="left:1061px;top:522.9px;width:18px;height:16.8px;border:1.5px solid #5aaae0;border-radius:2.5px;background:linear-gradient(#fdfdfd,#f0f0f0 60%,#e4e4e4)"></div>
<svg class="ab" style="left:1063.5px;top:525.4px;" width="13" height="12" viewBox="0 0 13 12"><rect x="0.5" y="0.5" width="10.5" height="8" fill="#e6eef8" stroke="#8a9ab8" stroke-width="0.8"/><path d="M6 10.5 L11.5 4.5" stroke="#e0a830" stroke-width="2"/><path d="M11 4.5 L12 3.5" stroke="#d04040" stroke-width="1.5"/></svg>
<div class="ab" style="left:1082.3px;top:522.9px;width:18px;height:16.8px;border:1.5px solid #5aaae0;border-radius:2.5px;background:linear-gradient(#fdfdfd,#f0f0f0 60%,#e4e4e4)"></div>
<svg class="ab" style="left:1084.8px;top:524.9px;" width="13" height="13" viewBox="0 0 13 13"><rect x="0.5" y="0.5" width="6.5" height="8.5" fill="#e4eefa" stroke="#3a70b8" stroke-width="0.8"/><path d="M1.8 3 L5.5 3 M1.8 5 L5.5 5" stroke="#6a98d0" stroke-width="0.7"/><path d="M5 4 L9.5 4 L11.5 6 L11.5 12.5 L5 12.5 Z" fill="#e4eefa" stroke="#3a70b8" stroke-width="0.8"/></svg>
<div class="ab" style="left:306.3px;top:161.5px;width:794.0px;height:325.4px;background:#fff;border:1px solid #d4d4d4;border-top-color:#c8c8c8"></div>
<div class="ab" style="left:307.3px;top:194.74px;width:59.39999999999998px;height:291.26px;background:#f2f2f2"></div>
<div class="ab" style="left:307.3px;top:194px;width:778.1000000000001px;height:1px;background:#e2e2e2"></div>
<div class="ab" style="left:307.3px;top:209px;width:778.1000000000001px;height:1px;background:#e2e2e2"></div>
<div class="ab" style="left:307.3px;top:225px;width:778.1000000000001px;height:1px;background:#e2e2e2"></div>
<div class="ab" style="left:307.3px;top:240px;width:778.1000000000001px;height:1px;background:#e2e2e2"></div>
<div class="ab" style="left:307.3px;top:255px;width:778.1000000000001px;height:1px;background:#e2e2e2"></div>
<div class="ab" style="left:307.3px;top:270px;width:778.1000000000001px;height:1px;background:#e2e2e2"></div>
<div class="ab" style="left:307.3px;top:285px;width:778.1000000000001px;height:1px;background:#e2e2e2"></div>
<div class="ab" style="left:307.3px;top:300px;width:778.1000000000001px;height:1px;background:#e2e2e2"></div>
<div class="ab" style="left:307.3px;top:315px;width:778.1000000000001px;height:1px;background:#e2e2e2"></div>
<div class="ab" style="left:307.3px;top:330px;width:778.1000000000001px;height:1px;background:#e2e2e2"></div>
<div class="ab" style="left:307.3px;top:346px;width:778.1000000000001px;height:1px;background:#e2e2e2"></div>
<div class="ab" style="left:307.3px;top:361px;width:778.1000000000001px;height:1px;background:#e2e2e2"></div>
<div class="ab" style="left:307.3px;top:376px;width:778.1000000000001px;height:1px;background:#e2e2e2"></div>
<div class="ab" style="left:307.3px;top:391px;width:778.1000000000001px;height:1px;background:#e2e2e2"></div>
<div class="ab" style="left:307.3px;top:406px;width:778.1000000000001px;height:1px;background:#e2e2e2"></div>
<div class="ab" style="left:307.3px;top:421px;width:778.1000000000001px;height:1px;background:#e2e2e2"></div>
<div class="ab" style="left:307.3px;top:436px;width:778.1000000000001px;height:1px;background:#e2e2e2"></div>
<div class="ab" style="left:307.3px;top:452px;width:778.1000000000001px;height:1px;background:#e2e2e2"></div>
<div class="ab" style="left:307.3px;top:467px;width:778.1000000000001px;height:1px;background:#e2e2e2"></div>
<div class="ab" style="left:307.3px;top:482px;width:778.1000000000001px;height:1px;background:#e2e2e2"></div>
<div class="ab" style="left:366px;top:179.6px;width:1px;height:306.4px;background:#e4e4e4"></div>
<div class="ab" style="left:426px;top:179.6px;width:1px;height:306.4px;background:#e4e4e4"></div>
<div class="ab" style="left:486px;top:179.6px;width:1px;height:306.4px;background:#e4e4e4"></div>
<div class="ab" style="left:545px;top:179.6px;width:1px;height:306.4px;background:#e4e4e4"></div>
<div class="ab" style="left:605px;top:179.6px;width:1px;height:306.4px;background:#e4e4e4"></div>
<div class="ab" style="left:665px;top:179.6px;width:1px;height:306.4px;background:#e4e4e4"></div>
<div class="ab" style="left:724px;top:179.6px;width:1px;height:306.4px;background:#e4e4e4"></div>
<div class="ab" style="left:784px;top:179.6px;width:1px;height:306.4px;background:#e4e4e4"></div>
<div class="ab" style="left:844px;top:179.6px;width:1px;height:306.4px;background:#e4e4e4"></div>
<div class="ab" style="left:904px;top:179.6px;width:1px;height:306.4px;background:#e4e4e4"></div>
<div class="ab" style="left:963px;top:179.6px;width:1px;height:306.4px;background:#e4e4e4"></div>
<div class="ab" style="left:1023px;top:179.6px;width:1px;height:306.4px;background:#e4e4e4"></div>
<div class="ab" style="left:306.90000000000003px;top:162.2px;width:779.1000000000001px;height:18.1px;background:linear-gradient(#fcfcfc,#f2f2f2 45%,#dcdcdc 95%);border:1.4px solid #4a9ad6;border-top:2px solid #62ace0;border-radius:1.5px"></div>
<div class="ab" style="left:366px;top:162.5px;width:1px;height:18px;background:#4a9ad6;box-shadow:0.5px 0 0 #9ccbec"></div>
<div class="ab" style="left:426px;top:162.5px;width:1px;height:18px;background:#4a9ad6;box-shadow:0.5px 0 0 #9ccbec"></div>
<div class="ab" style="left:486px;top:162.5px;width:1px;height:18px;background:#4a9ad6;box-shadow:0.5px 0 0 #9ccbec"></div>
<div class="ab" style="left:545px;top:162.5px;width:1px;height:18px;background:#4a9ad6;box-shadow:0.5px 0 0 #9ccbec"></div>
<div class="ab" style="left:605px;top:162.5px;width:1px;height:18px;background:#4a9ad6;box-shadow:0.5px 0 0 #9ccbec"></div>
<div class="ab" style="left:665px;top:162.5px;width:1px;height:18px;background:#4a9ad6;box-shadow:0.5px 0 0 #9ccbec"></div>
<div class="ab" style="left:724px;top:162.5px;width:1px;height:18px;background:#4a9ad6;box-shadow:0.5px 0 0 #9ccbec"></div>
<div class="ab" style="left:784px;top:162.5px;width:1px;height:18px;background:#4a9ad6;box-shadow:0.5px 0 0 #9ccbec"></div>
<div class="ab" style="left:844px;top:162.5px;width:1px;height:18px;background:#4a9ad6;box-shadow:0.5px 0 0 #9ccbec"></div>
<div class="ab" style="left:904px;top:162.5px;width:1px;height:18px;background:#4a9ad6;box-shadow:0.5px 0 0 #9ccbec"></div>
<div class="ab" style="left:963px;top:162.5px;width:1px;height:18px;background:#4a9ad6;box-shadow:0.5px 0 0 #9ccbec"></div>
<div class="ab" style="left:1023px;top:162.5px;width:1px;height:18px;background:#4a9ad6;box-shadow:0.5px 0 0 #9ccbec"></div>
<div class="t" style="left:313.08px;top:167.95px;font-size:9px;color:#1a1a1a;transform:scaleX(0.910);">Fascia oraria</div>
<div class="t" style="left:388.82px;top:167.95px;font-size:9px;color:#1a1a1a;transform:scaleX(0.910);">Gen</div>
<div class="t" style="left:449.21px;top:167.95px;font-size:9px;color:#1a1a1a;transform:scaleX(0.910);">Feb</div>
<div class="t" style="left:508.92px;top:167.95px;font-size:9px;color:#1a1a1a;transform:scaleX(0.910);">Mar</div>
<div class="t" style="left:569.31px;top:167.95px;font-size:9px;color:#1a1a1a;transform:scaleX(0.910);">Apr</div>
<div class="t" style="left:627.43px;top:167.95px;font-size:9px;color:#1a1a1a;transform:scaleX(0.910);">Mag</div>
<div class="t" style="left:688.73px;top:167.95px;font-size:9px;color:#1a1a1a;transform:scaleX(0.910);">Giu</div>
<div class="t" style="left:747.98px;top:167.95px;font-size:9px;color:#1a1a1a;transform:scaleX(0.910);">Lug</div>
<div class="t" style="left:807.24px;top:167.95px;font-size:9px;color:#1a1a1a;transform:scaleX(0.910);">Ago</div>
<div class="t" style="left:868.09px;top:167.95px;font-size:9px;color:#1a1a1a;transform:scaleX(0.910);">Set</div>
<div class="t" style="left:928.48px;top:167.95px;font-size:9px;color:#1a1a1a;transform:scaleX(0.910);">Ott</div>
<div class="t" style="left:986.37px;top:167.95px;font-size:9px;color:#1a1a1a;transform:scaleX(0.910);">Nov</div>
<div class="t" style="left:1048.54px;top:167.95px;font-size:9px;color:#1a1a1a;transform:scaleX(0.910);">Dic</div>
<div class="t" style="left:322.98px;top:182.65px;font-size:9px;font-weight:bold;color:#1a1a1a;transform:scaleX(0.983);-webkit-text-stroke:0;letter-spacing:0.1px">00 : 01</div>
<div class="t" style="left:388.05px;top:182.63px;font-size:8.9px;color:#1a1a1a;transform:scaleX(0.982);">1,00</div>
<div class="t" style="left:447.76px;top:182.63px;font-size:8.9px;color:#1a1a1a;transform:scaleX(0.982);">1,00</div>
<div class="t" style="left:507.47px;top:182.63px;font-size:8.9px;color:#1a1a1a;transform:scaleX(0.982);">1,00</div>
<div class="t" style="left:567.18px;top:182.63px;font-size:8.9px;color:#1a1a1a;transform:scaleX(0.982);">1,00</div>
<div class="t" style="left:626.89px;top:182.63px;font-size:8.9px;color:#1a1a1a;transform:scaleX(0.982);">1,00</div>
<div class="t" style="left:686.60px;top:182.63px;font-size:8.9px;color:#1a1a1a;transform:scaleX(0.982);">1,00</div>
<div class="t" style="left:746.31px;top:182.63px;font-size:8.9px;color:#1a1a1a;transform:scaleX(0.982);">1,00</div>
<div class="t" style="left:806.02px;top:182.63px;font-size:8.9px;color:#1a1a1a;transform:scaleX(0.982);">1,00</div>
<div class="t" style="left:865.73px;top:182.63px;font-size:8.9px;color:#1a1a1a;transform:scaleX(0.982);">1,00</div>
<div class="t" style="left:925.44px;top:182.63px;font-size:8.9px;color:#1a1a1a;transform:scaleX(0.982);">1,00</div>
<div class="t" style="left:985.15px;top:182.63px;font-size:8.9px;color:#1a1a1a;transform:scaleX(0.982);">1,00</div>
<div class="t" style="left:1045.95px;top:182.63px;font-size:8.9px;color:#1a1a1a;transform:scaleX(0.982);">1,00</div>
<div class="t" style="left:322.98px;top:197.79px;font-size:9px;font-weight:bold;color:#1a1a1a;transform:scaleX(0.983);-webkit-text-stroke:0;letter-spacing:0.1px">01 : 02</div>
<div class="t" style="left:388.05px;top:197.77px;font-size:8.9px;color:#1a1a1a;transform:scaleX(0.982);">1,00</div>
<div class="t" style="left:447.76px;top:197.77px;font-size:8.9px;color:#1a1a1a;transform:scaleX(0.982);">1,00</div>
<div class="t" style="left:507.47px;top:197.77px;font-size:8.9px;color:#1a1a1a;transform:scaleX(0.982);">1,00</div>
<div class="t" style="left:567.18px;top:197.77px;font-size:8.9px;color:#1a1a1a;transform:scaleX(0.982);">1,00</div>
<div class="t" style="left:626.89px;top:197.77px;font-size:8.9px;color:#1a1a1a;transform:scaleX(0.982);">1,00</div>
<div class="t" style="left:686.60px;top:197.77px;font-size:8.9px;color:#1a1a1a;transform:scaleX(0.982);">1,00</div>
<div class="t" style="left:746.31px;top:197.77px;font-size:8.9px;color:#1a1a1a;transform:scaleX(0.982);">1,00</div>
<div class="t" style="left:806.02px;top:197.77px;font-size:8.9px;color:#1a1a1a;transform:scaleX(0.982);">1,00</div>
<div class="t" style="left:865.73px;top:197.77px;font-size:8.9px;color:#1a1a1a;transform:scaleX(0.982);">1,00</div>
<div class="t" style="left:925.44px;top:197.77px;font-size:8.9px;color:#1a1a1a;transform:scaleX(0.982);">1,00</div>
<div class="t" style="left:985.15px;top:197.77px;font-size:8.9px;color:#1a1a1a;transform:scaleX(0.982);">1,00</div>
<div class="t" style="left:1045.95px;top:197.77px;font-size:8.9px;color:#1a1a1a;transform:scaleX(0.982);">1,00</div>
<div class="t" style="left:322.98px;top:212.93px;font-size:9px;font-weight:bold;color:#1a1a1a;transform:scaleX(0.983);-webkit-text-stroke:0;letter-spacing:0.1px">02 : 03</div>
<div class="t" style="left:388.05px;top:212.91px;font-size:8.9px;color:#1a1a1a;transform:scaleX(0.982);">1,00</div>
<div class="t" style="left:447.76px;top:212.91px;font-size:8.9px;color:#1a1a1a;transform:scaleX(0.982);">1,00</div>
<div class="t" style="left:507.47px;top:212.91px;font-size:8.9px;color:#1a1a1a;transform:scaleX(0.982);">1,00</div>
<div class="t" style="left:567.18px;top:212.91px;font-size:8.9px;color:#1a1a1a;transform:scaleX(0.982);">1,00</div>
<div class="t" style="left:626.89px;top:212.91px;font-size:8.9px;color:#1a1a1a;transform:scaleX(0.982);">1,00</div>
<div class="t" style="left:686.60px;top:212.91px;font-size:8.9px;color:#1a1a1a;transform:scaleX(0.982);">1,00</div>
<div class="t" style="left:746.31px;top:212.91px;font-size:8.9px;color:#1a1a1a;transform:scaleX(0.982);">1,00</div>
<div class="t" style="left:806.02px;top:212.91px;font-size:8.9px;color:#1a1a1a;transform:scaleX(0.982);">1,00</div>
<div class="t" style="left:865.73px;top:212.91px;font-size:8.9px;color:#1a1a1a;transform:scaleX(0.982);">1,00</div>
<div class="t" style="left:925.44px;top:212.91px;font-size:8.9px;color:#1a1a1a;transform:scaleX(0.982);">1,00</div>
<div class="t" style="left:985.15px;top:212.91px;font-size:8.9px;color:#1a1a1a;transform:scaleX(0.982);">1,00</div>
<div class="t" style="left:1045.95px;top:212.91px;font-size:8.9px;color:#1a1a1a;transform:scaleX(0.982);">1,00</div>
<div class="t" style="left:322.98px;top:228.07px;font-size:9px;font-weight:bold;color:#1a1a1a;transform:scaleX(0.983);-webkit-text-stroke:0;letter-spacing:0.1px">03 : 04</div>
<div class="t" style="left:388.05px;top:228.06px;font-size:8.9px;color:#1a1a1a;transform:scaleX(0.982);">1,00</div>
<div class="t" style="left:447.76px;top:228.06px;font-size:8.9px;color:#1a1a1a;transform:scaleX(0.982);">1,00</div>
<div class="t" style="left:507.47px;top:228.06px;font-size:8.9px;color:#1a1a1a;transform:scaleX(0.982);">1,00</div>
<div class="t" style="left:567.18px;top:228.06px;font-size:8.9px;color:#1a1a1a;transform:scaleX(0.982);">1,00</div>
<div class="t" style="left:626.89px;top:228.06px;font-size:8.9px;color:#1a1a1a;transform:scaleX(0.982);">1,00</div>
<div class="t" style="left:686.60px;top:228.06px;font-size:8.9px;color:#1a1a1a;transform:scaleX(0.982);">1,00</div>
<div class="t" style="left:746.31px;top:228.06px;font-size:8.9px;color:#1a1a1a;transform:scaleX(0.982);">1,00</div>
<div class="t" style="left:806.02px;top:228.06px;font-size:8.9px;color:#1a1a1a;transform:scaleX(0.982);">1,00</div>
<div class="t" style="left:865.73px;top:228.06px;font-size:8.9px;color:#1a1a1a;transform:scaleX(0.982);">1,00</div>
<div class="t" style="left:925.44px;top:228.06px;font-size:8.9px;color:#1a1a1a;transform:scaleX(0.982);">1,00</div>
<div class="t" style="left:985.15px;top:228.06px;font-size:8.9px;color:#1a1a1a;transform:scaleX(0.982);">1,00</div>
<div class="t" style="left:1045.95px;top:228.06px;font-size:8.9px;color:#1a1a1a;transform:scaleX(0.982);">1,00</div>
<div class="t" style="left:322.98px;top:243.21px;font-size:9px;font-weight:bold;color:#1a1a1a;transform:scaleX(0.983);-webkit-text-stroke:0;letter-spacing:0.1px">04 : 05</div>
<div class="t" style="left:388.05px;top:243.19px;font-size:8.9px;color:#1a1a1a;transform:scaleX(0.982);">1,00</div>
<div class="t" style="left:447.76px;top:243.19px;font-size:8.9px;color:#1a1a1a;transform:scaleX(0.982);">1,00</div>
<div class="t" style="left:507.47px;top:243.19px;font-size:8.9px;color:#1a1a1a;transform:scaleX(0.982);">1,00</div>
<div class="t" style="left:567.18px;top:243.19px;font-size:8.9px;color:#1a1a1a;transform:scaleX(0.982);">1,00</div>
<div class="t" style="left:626.89px;top:243.19px;font-size:8.9px;color:#1a1a1a;transform:scaleX(0.982);">1,00</div>
<div class="t" style="left:686.60px;top:243.19px;font-size:8.9px;color:#1a1a1a;transform:scaleX(0.982);">1,00</div>
<div class="t" style="left:746.31px;top:243.19px;font-size:8.9px;color:#1a1a1a;transform:scaleX(0.982);">1,00</div>
<div class="t" style="left:806.02px;top:243.19px;font-size:8.9px;color:#1a1a1a;transform:scaleX(0.982);">1,00</div>
<div class="t" style="left:865.73px;top:243.19px;font-size:8.9px;color:#1a1a1a;transform:scaleX(0.982);">1,00</div>
<div class="t" style="left:925.44px;top:243.19px;font-size:8.9px;color:#1a1a1a;transform:scaleX(0.982);">1,00</div>
<div class="t" style="left:985.15px;top:243.19px;font-size:8.9px;color:#1a1a1a;transform:scaleX(0.982);">1,00</div>
<div class="t" style="left:1045.95px;top:243.19px;font-size:8.9px;color:#1a1a1a;transform:scaleX(0.982);">1,00</div>
<div class="t" style="left:322.98px;top:258.35px;font-size:9px;font-weight:bold;color:#1a1a1a;transform:scaleX(0.983);-webkit-text-stroke:0;letter-spacing:0.1px">05 : 06</div>
<div class="t" style="left:388.05px;top:258.33px;font-size:8.9px;color:#1a1a1a;transform:scaleX(0.982);">1,00</div>
<div class="t" style="left:447.76px;top:258.33px;font-size:8.9px;color:#1a1a1a;transform:scaleX(0.982);">1,00</div>
<div class="t" style="left:507.47px;top:258.33px;font-size:8.9px;color:#1a1a1a;transform:scaleX(0.982);">1,00</div>
<div class="t" style="left:567.18px;top:258.33px;font-size:8.9px;color:#1a1a1a;transform:scaleX(0.982);">1,00</div>
<div class="t" style="left:626.89px;top:258.33px;font-size:8.9px;color:#1a1a1a;transform:scaleX(0.982);">1,00</div>
<div class="t" style="left:686.60px;top:258.33px;font-size:8.9px;color:#1a1a1a;transform:scaleX(0.982);">1,00</div>
<div class="t" style="left:746.31px;top:258.33px;font-size:8.9px;color:#1a1a1a;transform:scaleX(0.982);">1,00</div>
<div class="t" style="left:806.02px;top:258.33px;font-size:8.9px;color:#1a1a1a;transform:scaleX(0.982);">1,00</div>
<div class="t" style="left:865.73px;top:258.33px;font-size:8.9px;color:#1a1a1a;transform:scaleX(0.982);">1,00</div>
<div class="t" style="left:925.44px;top:258.33px;font-size:8.9px;color:#1a1a1a;transform:scaleX(0.982);">1,00</div>
<div class="t" style="left:985.15px;top:258.33px;font-size:8.9px;color:#1a1a1a;transform:scaleX(0.982);">1,00</div>
<div class="t" style="left:1045.95px;top:258.33px;font-size:8.9px;color:#1a1a1a;transform:scaleX(0.982);">1,00</div>
<div class="t" style="left:322.98px;top:273.49px;font-size:9px;font-weight:bold;color:#1a1a1a;transform:scaleX(0.983);-webkit-text-stroke:0;letter-spacing:0.1px">06 : 07</div>
<div class="t" style="left:388.05px;top:273.47px;font-size:8.9px;color:#1a1a1a;transform:scaleX(0.982);">1,00</div>
<div class="t" style="left:447.76px;top:273.47px;font-size:8.9px;color:#1a1a1a;transform:scaleX(0.982);">1,00</div>
<div class="t" style="left:507.47px;top:273.47px;font-size:8.9px;color:#1a1a1a;transform:scaleX(0.982);">1,00</div>
<div class="t" style="left:567.18px;top:273.47px;font-size:8.9px;color:#1a1a1a;transform:scaleX(0.982);">1,00</div>
<div class="t" style="left:626.89px;top:273.47px;font-size:8.9px;color:#1a1a1a;transform:scaleX(0.982);">1,00</div>
<div class="t" style="left:686.60px;top:273.47px;font-size:8.9px;color:#1a1a1a;transform:scaleX(0.982);">1,00</div>
<div class="t" style="left:746.31px;top:273.47px;font-size:8.9px;color:#1a1a1a;transform:scaleX(0.982);">1,00</div>
<div class="t" style="left:806.02px;top:273.47px;font-size:8.9px;color:#1a1a1a;transform:scaleX(0.982);">1,00</div>
<div class="t" style="left:865.73px;top:273.47px;font-size:8.9px;color:#1a1a1a;transform:scaleX(0.982);">1,00</div>
<div class="t" style="left:925.44px;top:273.47px;font-size:8.9px;color:#1a1a1a;transform:scaleX(0.982);">1,00</div>
<div class="t" style="left:985.15px;top:273.47px;font-size:8.9px;color:#1a1a1a;transform:scaleX(0.982);">1,00</div>
<div class="t" style="left:1045.95px;top:273.47px;font-size:8.9px;color:#1a1a1a;transform:scaleX(0.982);">1,00</div>
<div class="t" style="left:322.98px;top:288.63px;font-size:9px;font-weight:bold;color:#1a1a1a;transform:scaleX(0.983);-webkit-text-stroke:0;letter-spacing:0.1px">07 : 08</div>
<div class="t" style="left:388.05px;top:288.62px;font-size:8.9px;color:#1a1a1a;transform:scaleX(0.982);">1,00</div>
<div class="t" style="left:447.76px;top:288.62px;font-size:8.9px;color:#1a1a1a;transform:scaleX(0.982);">1,00</div>
<div class="t" style="left:507.47px;top:288.62px;font-size:8.9px;color:#1a1a1a;transform:scaleX(0.982);">1,00</div>
<div class="t" style="left:567.18px;top:288.62px;font-size:8.9px;color:#1a1a1a;transform:scaleX(0.982);">1,00</div>
<div class="t" style="left:626.89px;top:288.62px;font-size:8.9px;color:#1a1a1a;transform:scaleX(0.982);">1,00</div>
<div class="t" style="left:686.60px;top:288.62px;font-size:8.9px;color:#1a1a1a;transform:scaleX(0.982);">1,00</div>
<div class="t" style="left:746.31px;top:288.62px;font-size:8.9px;color:#1a1a1a;transform:scaleX(0.982);">1,00</div>
<div class="t" style="left:806.02px;top:288.62px;font-size:8.9px;color:#1a1a1a;transform:scaleX(0.982);">1,00</div>
<div class="t" style="left:865.73px;top:288.62px;font-size:8.9px;color:#1a1a1a;transform:scaleX(0.982);">1,00</div>
<div class="t" style="left:925.44px;top:288.62px;font-size:8.9px;color:#1a1a1a;transform:scaleX(0.982);">1,00</div>
<div class="t" style="left:985.15px;top:288.62px;font-size:8.9px;color:#1a1a1a;transform:scaleX(0.982);">1,00</div>
<div class="t" style="left:1045.95px;top:288.62px;font-size:8.9px;color:#1a1a1a;transform:scaleX(0.982);">1,00</div>
<div class="t" style="left:322.98px;top:303.77px;font-size:9px;font-weight:bold;color:#1a1a1a;transform:scaleX(0.983);-webkit-text-stroke:0;letter-spacing:0.1px">08 : 09</div>
<div class="t" style="left:388.05px;top:303.75px;font-size:8.9px;color:#1a1a1a;transform:scaleX(0.982);">0,00</div>
<div class="t" style="left:447.76px;top:303.75px;font-size:8.9px;color:#1a1a1a;transform:scaleX(0.982);">0,00</div>
<div class="t" style="left:507.47px;top:303.75px;font-size:8.9px;color:#1a1a1a;transform:scaleX(0.982);">0,00</div>
<div class="t" style="left:567.18px;top:303.75px;font-size:8.9px;color:#1a1a1a;transform:scaleX(0.982);">0,00</div>
<div class="t" style="left:626.89px;top:303.75px;font-size:8.9px;color:#1a1a1a;transform:scaleX(0.982);">0,00</div>
<div class="t" style="left:686.60px;top:303.75px;font-size:8.9px;color:#1a1a1a;transform:scaleX(0.982);">0,00</div>
<div class="t" style="left:746.31px;top:303.75px;font-size:8.9px;color:#1a1a1a;transform:scaleX(0.982);">0,00</div>
<div class="t" style="left:806.02px;top:303.75px;font-size:8.9px;color:#1a1a1a;transform:scaleX(0.982);">0,00</div>
<div class="t" style="left:865.73px;top:303.75px;font-size:8.9px;color:#1a1a1a;transform:scaleX(0.982);">0,00</div>
<div class="t" style="left:925.44px;top:303.75px;font-size:8.9px;color:#1a1a1a;transform:scaleX(0.982);">0,00</div>
<div class="t" style="left:985.15px;top:303.75px;font-size:8.9px;color:#1a1a1a;transform:scaleX(0.982);">0,00</div>
<div class="t" style="left:1045.95px;top:303.75px;font-size:8.9px;color:#1a1a1a;transform:scaleX(0.982);">0,00</div>
<div class="t" style="left:322.98px;top:318.91px;font-size:9px;font-weight:bold;color:#1a1a1a;transform:scaleX(0.983);-webkit-text-stroke:0;letter-spacing:0.1px">09 : 10</div>
<div class="t" style="left:388.05px;top:318.89px;font-size:8.9px;color:#1a1a1a;transform:scaleX(0.982);">0,00</div>
<div class="t" style="left:447.76px;top:318.89px;font-size:8.9px;color:#1a1a1a;transform:scaleX(0.982);">0,00</div>
<div class="t" style="left:507.47px;top:318.89px;font-size:8.9px;color:#1a1a1a;transform:scaleX(0.982);">0,00</div>
<div class="t" style="left:567.18px;top:318.89px;font-size:8.9px;color:#1a1a1a;transform:scaleX(0.982);">0,00</div>
<div class="t" style="left:626.89px;top:318.89px;font-size:8.9px;color:#1a1a1a;transform:scaleX(0.982);">0,00</div>
<div class="t" style="left:686.60px;top:318.89px;font-size:8.9px;color:#1a1a1a;transform:scaleX(0.982);">0,00</div>
<div class="t" style="left:746.31px;top:318.89px;font-size:8.9px;color:#1a1a1a;transform:scaleX(0.982);">0,00</div>
<div class="t" style="left:806.02px;top:318.89px;font-size:8.9px;color:#1a1a1a;transform:scaleX(0.982);">0,00</div>
<div class="t" style="left:865.73px;top:318.89px;font-size:8.9px;color:#1a1a1a;transform:scaleX(0.982);">0,00</div>
<div class="t" style="left:925.44px;top:318.89px;font-size:8.9px;color:#1a1a1a;transform:scaleX(0.982);">0,00</div>
<div class="t" style="left:985.15px;top:318.89px;font-size:8.9px;color:#1a1a1a;transform:scaleX(0.982);">0,00</div>
<div class="t" style="left:1045.95px;top:318.89px;font-size:8.9px;color:#1a1a1a;transform:scaleX(0.982);">0,00</div>
<div class="t" style="left:323.22px;top:334.05px;font-size:9px;font-weight:bold;color:#1a1a1a;transform:scaleX(0.983);-webkit-text-stroke:0;letter-spacing:0.1px">10 : 11</div>
<div class="t" style="left:388.05px;top:334.04px;font-size:8.9px;color:#1a1a1a;transform:scaleX(0.982);">0,00</div>
<div class="t" style="left:447.76px;top:334.04px;font-size:8.9px;color:#1a1a1a;transform:scaleX(0.982);">0,00</div>
<div class="t" style="left:507.47px;top:334.04px;font-size:8.9px;color:#1a1a1a;transform:scaleX(0.982);">0,00</div>
<div class="t" style="left:567.18px;top:334.04px;font-size:8.9px;color:#1a1a1a;transform:scaleX(0.982);">0,00</div>
<div class="t" style="left:626.89px;top:334.04px;font-size:8.9px;color:#1a1a1a;transform:scaleX(0.982);">0,00</div>
<div class="t" style="left:686.60px;top:334.04px;font-size:8.9px;color:#1a1a1a;transform:scaleX(0.982);">0,00</div>
<div class="t" style="left:746.31px;top:334.04px;font-size:8.9px;color:#1a1a1a;transform:scaleX(0.982);">0,00</div>
<div class="t" style="left:806.02px;top:334.04px;font-size:8.9px;color:#1a1a1a;transform:scaleX(0.982);">0,00</div>
<div class="t" style="left:865.73px;top:334.04px;font-size:8.9px;color:#1a1a1a;transform:scaleX(0.982);">0,00</div>
<div class="t" style="left:925.44px;top:334.04px;font-size:8.9px;color:#1a1a1a;transform:scaleX(0.982);">0,00</div>
<div class="t" style="left:985.15px;top:334.04px;font-size:8.9px;color:#1a1a1a;transform:scaleX(0.982);">0,00</div>
<div class="t" style="left:1045.95px;top:334.04px;font-size:8.9px;color:#1a1a1a;transform:scaleX(0.982);">0,00</div>
<div class="t" style="left:323.22px;top:349.19px;font-size:9px;font-weight:bold;color:#1a1a1a;transform:scaleX(0.983);-webkit-text-stroke:0;letter-spacing:0.1px">11 : 12</div>
<div class="t" style="left:388.05px;top:349.18px;font-size:8.9px;color:#1a1a1a;transform:scaleX(0.982);">0,00</div>
<div class="t" style="left:447.76px;top:349.18px;font-size:8.9px;color:#1a1a1a;transform:scaleX(0.982);">0,00</div>
<div class="t" style="left:507.47px;top:349.18px;font-size:8.9px;color:#1a1a1a;transform:scaleX(0.982);">0,00</div>
<div class="t" style="left:567.18px;top:349.18px;font-size:8.9px;color:#1a1a1a;transform:scaleX(0.982);">0,00</div>
<div class="t" style="left:626.89px;top:349.18px;font-size:8.9px;color:#1a1a1a;transform:scaleX(0.982);">0,00</div>
<div class="t" style="left:686.60px;top:349.18px;font-size:8.9px;color:#1a1a1a;transform:scaleX(0.982);">0,00</div>
<div class="t" style="left:746.31px;top:349.18px;font-size:8.9px;color:#1a1a1a;transform:scaleX(0.982);">0,00</div>
<div class="t" style="left:806.02px;top:349.18px;font-size:8.9px;color:#1a1a1a;transform:scaleX(0.982);">0,00</div>
<div class="t" style="left:865.73px;top:349.18px;font-size:8.9px;color:#1a1a1a;transform:scaleX(0.982);">0,00</div>
<div class="t" style="left:925.44px;top:349.18px;font-size:8.9px;color:#1a1a1a;transform:scaleX(0.982);">0,00</div>
<div class="t" style="left:985.15px;top:349.18px;font-size:8.9px;color:#1a1a1a;transform:scaleX(0.982);">0,00</div>
<div class="t" style="left:1045.95px;top:349.18px;font-size:8.9px;color:#1a1a1a;transform:scaleX(0.982);">0,00</div>
<div class="t" style="left:322.98px;top:364.33px;font-size:9px;font-weight:bold;color:#1a1a1a;transform:scaleX(0.983);-webkit-text-stroke:0;letter-spacing:0.1px">12 : 13</div>
<div class="t" style="left:388.05px;top:364.31px;font-size:8.9px;color:#1a1a1a;transform:scaleX(0.982);">0,00</div>
<div class="t" style="left:447.76px;top:364.31px;font-size:8.9px;color:#1a1a1a;transform:scaleX(0.982);">0,00</div>
<div class="t" style="left:507.47px;top:364.31px;font-size:8.9px;color:#1a1a1a;transform:scaleX(0.982);">0,00</div>
<div class="t" style="left:567.18px;top:364.31px;font-size:8.9px;color:#1a1a1a;transform:scaleX(0.982);">0,00</div>
<div class="t" style="left:626.89px;top:364.31px;font-size:8.9px;color:#1a1a1a;transform:scaleX(0.982);">0,00</div>
<div class="t" style="left:686.60px;top:364.31px;font-size:8.9px;color:#1a1a1a;transform:scaleX(0.982);">0,00</div>
<div class="t" style="left:746.31px;top:364.31px;font-size:8.9px;color:#1a1a1a;transform:scaleX(0.982);">0,00</div>
<div class="t" style="left:806.02px;top:364.31px;font-size:8.9px;color:#1a1a1a;transform:scaleX(0.982);">0,00</div>
<div class="t" style="left:865.73px;top:364.31px;font-size:8.9px;color:#1a1a1a;transform:scaleX(0.982);">0,00</div>
<div class="t" style="left:925.44px;top:364.31px;font-size:8.9px;color:#1a1a1a;transform:scaleX(0.982);">0,00</div>
<div class="t" style="left:985.15px;top:364.31px;font-size:8.9px;color:#1a1a1a;transform:scaleX(0.982);">0,00</div>
<div class="t" style="left:1045.95px;top:364.31px;font-size:8.9px;color:#1a1a1a;transform:scaleX(0.982);">0,00</div>
<div class="t" style="left:322.98px;top:379.47px;font-size:9px;font-weight:bold;color:#1a1a1a;transform:scaleX(0.983);-webkit-text-stroke:0;letter-spacing:0.1px">13 : 14</div>
<div class="t" style="left:388.05px;top:379.45px;font-size:8.9px;color:#1a1a1a;transform:scaleX(0.982);">0,00</div>
<div class="t" style="left:447.76px;top:379.45px;font-size:8.9px;color:#1a1a1a;transform:scaleX(0.982);">0,00</div>
<div class="t" style="left:507.47px;top:379.45px;font-size:8.9px;color:#1a1a1a;transform:scaleX(0.982);">0,00</div>
<div class="t" style="left:567.18px;top:379.45px;font-size:8.9px;color:#1a1a1a;transform:scaleX(0.982);">0,00</div>
<div class="t" style="left:626.89px;top:379.45px;font-size:8.9px;color:#1a1a1a;transform:scaleX(0.982);">0,00</div>
<div class="t" style="left:686.60px;top:379.45px;font-size:8.9px;color:#1a1a1a;transform:scaleX(0.982);">0,00</div>
<div class="t" style="left:746.31px;top:379.45px;font-size:8.9px;color:#1a1a1a;transform:scaleX(0.982);">0,00</div>
<div class="t" style="left:806.02px;top:379.45px;font-size:8.9px;color:#1a1a1a;transform:scaleX(0.982);">0,00</div>
<div class="t" style="left:865.73px;top:379.45px;font-size:8.9px;color:#1a1a1a;transform:scaleX(0.982);">0,00</div>
<div class="t" style="left:925.44px;top:379.45px;font-size:8.9px;color:#1a1a1a;transform:scaleX(0.982);">0,00</div>
<div class="t" style="left:985.15px;top:379.45px;font-size:8.9px;color:#1a1a1a;transform:scaleX(0.982);">0,00</div>
<div class="t" style="left:1045.95px;top:379.45px;font-size:8.9px;color:#1a1a1a;transform:scaleX(0.982);">0,00</div>
<div class="t" style="left:322.98px;top:394.61px;font-size:9px;font-weight:bold;color:#1a1a1a;transform:scaleX(0.983);-webkit-text-stroke:0;letter-spacing:0.1px">14 : 15</div>
<div class="t" style="left:388.05px;top:394.59px;font-size:8.9px;color:#1a1a1a;transform:scaleX(0.982);">0,00</div>
<div class="t" style="left:447.76px;top:394.59px;font-size:8.9px;color:#1a1a1a;transform:scaleX(0.982);">0,00</div>
<div class="t" style="left:507.47px;top:394.59px;font-size:8.9px;color:#1a1a1a;transform:scaleX(0.982);">0,00</div>
<div class="t" style="left:567.18px;top:394.59px;font-size:8.9px;color:#1a1a1a;transform:scaleX(0.982);">0,00</div>
<div class="t" style="left:626.89px;top:394.59px;font-size:8.9px;color:#1a1a1a;transform:scaleX(0.982);">0,00</div>
<div class="t" style="left:686.60px;top:394.59px;font-size:8.9px;color:#1a1a1a;transform:scaleX(0.982);">0,00</div>
<div class="t" style="left:746.31px;top:394.59px;font-size:8.9px;color:#1a1a1a;transform:scaleX(0.982);">0,00</div>
<div class="t" style="left:806.02px;top:394.59px;font-size:8.9px;color:#1a1a1a;transform:scaleX(0.982);">0,00</div>
<div class="t" style="left:865.73px;top:394.59px;font-size:8.9px;color:#1a1a1a;transform:scaleX(0.982);">0,00</div>
<div class="t" style="left:925.44px;top:394.59px;font-size:8.9px;color:#1a1a1a;transform:scaleX(0.982);">0,00</div>
<div class="t" style="left:985.15px;top:394.59px;font-size:8.9px;color:#1a1a1a;transform:scaleX(0.982);">0,00</div>
<div class="t" style="left:1045.95px;top:394.59px;font-size:8.9px;color:#1a1a1a;transform:scaleX(0.982);">0,00</div>
<div class="t" style="left:322.98px;top:409.75px;font-size:9px;font-weight:bold;color:#1a1a1a;transform:scaleX(0.983);-webkit-text-stroke:0;letter-spacing:0.1px">15 : 16</div>
<div class="t" style="left:388.05px;top:409.74px;font-size:8.9px;color:#1a1a1a;transform:scaleX(0.982);">0,00</div>
<div class="t" style="left:447.76px;top:409.74px;font-size:8.9px;color:#1a1a1a;transform:scaleX(0.982);">0,00</div>
<div class="t" style="left:507.47px;top:409.74px;font-size:8.9px;color:#1a1a1a;transform:scaleX(0.982);">0,00</div>
<div class="t" style="left:567.18px;top:409.74px;font-size:8.9px;color:#1a1a1a;transform:scaleX(0.982);">0,00</div>
<div class="t" style="left:626.89px;top:409.74px;font-size:8.9px;color:#1a1a1a;transform:scaleX(0.982);">0,00</div>
<div class="t" style="left:686.60px;top:409.74px;font-size:8.9px;color:#1a1a1a;transform:scaleX(0.982);">0,00</div>
<div class="t" style="left:746.31px;top:409.74px;font-size:8.9px;color:#1a1a1a;transform:scaleX(0.982);">0,00</div>
<div class="t" style="left:806.02px;top:409.74px;font-size:8.9px;color:#1a1a1a;transform:scaleX(0.982);">0,00</div>
<div class="t" style="left:865.73px;top:409.74px;font-size:8.9px;color:#1a1a1a;transform:scaleX(0.982);">0,00</div>
<div class="t" style="left:925.44px;top:409.74px;font-size:8.9px;color:#1a1a1a;transform:scaleX(0.982);">0,00</div>
<div class="t" style="left:985.15px;top:409.74px;font-size:8.9px;color:#1a1a1a;transform:scaleX(0.982);">0,00</div>
<div class="t" style="left:1045.95px;top:409.74px;font-size:8.9px;color:#1a1a1a;transform:scaleX(0.982);">0,00</div>
<div class="t" style="left:322.98px;top:424.89px;font-size:9px;font-weight:bold;color:#1a1a1a;transform:scaleX(0.983);-webkit-text-stroke:0;letter-spacing:0.1px">16 : 17</div>
<div class="t" style="left:388.05px;top:424.88px;font-size:8.9px;color:#1a1a1a;transform:scaleX(0.982);">0,00</div>
<div class="t" style="left:447.76px;top:424.88px;font-size:8.9px;color:#1a1a1a;transform:scaleX(0.982);">0,00</div>
<div class="t" style="left:507.47px;top:424.88px;font-size:8.9px;color:#1a1a1a;transform:scaleX(0.982);">0,00</div>
<div class="t" style="left:567.18px;top:424.88px;font-size:8.9px;color:#1a1a1a;transform:scaleX(0.982);">0,00</div>
<div class="t" style="left:626.89px;top:424.88px;font-size:8.9px;color:#1a1a1a;transform:scaleX(0.982);">0,00</div>
<div class="t" style="left:686.60px;top:424.88px;font-size:8.9px;color:#1a1a1a;transform:scaleX(0.982);">0,00</div>
<div class="t" style="left:746.31px;top:424.88px;font-size:8.9px;color:#1a1a1a;transform:scaleX(0.982);">0,00</div>
<div class="t" style="left:806.02px;top:424.88px;font-size:8.9px;color:#1a1a1a;transform:scaleX(0.982);">0,00</div>
<div class="t" style="left:865.73px;top:424.88px;font-size:8.9px;color:#1a1a1a;transform:scaleX(0.982);">0,00</div>
<div class="t" style="left:925.44px;top:424.88px;font-size:8.9px;color:#1a1a1a;transform:scaleX(0.982);">0,00</div>
<div class="t" style="left:985.15px;top:424.88px;font-size:8.9px;color:#1a1a1a;transform:scaleX(0.982);">0,00</div>
<div class="t" style="left:1045.95px;top:424.88px;font-size:8.9px;color:#1a1a1a;transform:scaleX(0.982);">0,00</div>
<div class="t" style="left:322.98px;top:440.03px;font-size:9px;font-weight:bold;color:#1a1a1a;transform:scaleX(0.983);-webkit-text-stroke:0;letter-spacing:0.1px">17 : 18</div>
<div class="t" style="left:388.05px;top:440.01px;font-size:8.9px;color:#1a1a1a;transform:scaleX(0.982);">0,00</div>
<div class="t" style="left:447.76px;top:440.01px;font-size:8.9px;color:#1a1a1a;transform:scaleX(0.982);">0,00</div>
<div class="t" style="left:507.47px;top:440.01px;font-size:8.9px;color:#1a1a1a;transform:scaleX(0.982);">0,00</div>
<div class="t" style="left:567.18px;top:440.01px;font-size:8.9px;color:#1a1a1a;transform:scaleX(0.982);">0,00</div>
<div class="t" style="left:626.89px;top:440.01px;font-size:8.9px;color:#1a1a1a;transform:scaleX(0.982);">0,00</div>
<div class="t" style="left:686.60px;top:440.01px;font-size:8.9px;color:#1a1a1a;transform:scaleX(0.982);">0,00</div>
<div class="t" style="left:746.31px;top:440.01px;font-size:8.9px;color:#1a1a1a;transform:scaleX(0.982);">0,00</div>
<div class="t" style="left:806.02px;top:440.01px;font-size:8.9px;color:#1a1a1a;transform:scaleX(0.982);">0,00</div>
<div class="t" style="left:865.73px;top:440.01px;font-size:8.9px;color:#1a1a1a;transform:scaleX(0.982);">0,00</div>
<div class="t" style="left:925.44px;top:440.01px;font-size:8.9px;color:#1a1a1a;transform:scaleX(0.982);">0,00</div>
<div class="t" style="left:985.15px;top:440.01px;font-size:8.9px;color:#1a1a1a;transform:scaleX(0.982);">0,00</div>
<div class="t" style="left:1045.95px;top:440.01px;font-size:8.9px;color:#1a1a1a;transform:scaleX(0.982);">0,00</div>
<div class="t" style="left:322.98px;top:455.17px;font-size:9px;font-weight:bold;color:#1a1a1a;transform:scaleX(0.983);-webkit-text-stroke:0;letter-spacing:0.1px">18 : 19</div>
<div class="t" style="left:388.05px;top:455.15px;font-size:8.9px;color:#1a1a1a;transform:scaleX(0.982);">0,00</div>
<div class="t" style="left:447.76px;top:455.15px;font-size:8.9px;color:#1a1a1a;transform:scaleX(0.982);">0,00</div>
<div class="t" style="left:507.47px;top:455.15px;font-size:8.9px;color:#1a1a1a;transform:scaleX(0.982);">0,00</div>
<div class="t" style="left:567.18px;top:455.15px;font-size:8.9px;color:#1a1a1a;transform:scaleX(0.982);">0,00</div>
<div class="t" style="left:626.89px;top:455.15px;font-size:8.9px;color:#1a1a1a;transform:scaleX(0.982);">0,00</div>
<div class="t" style="left:686.60px;top:455.15px;font-size:8.9px;color:#1a1a1a;transform:scaleX(0.982);">0,00</div>
<div class="t" style="left:746.31px;top:455.15px;font-size:8.9px;color:#1a1a1a;transform:scaleX(0.982);">0,00</div>
<div class="t" style="left:806.02px;top:455.15px;font-size:8.9px;color:#1a1a1a;transform:scaleX(0.982);">0,00</div>
<div class="t" style="left:865.73px;top:455.15px;font-size:8.9px;color:#1a1a1a;transform:scaleX(0.982);">0,00</div>
<div class="t" style="left:925.44px;top:455.15px;font-size:8.9px;color:#1a1a1a;transform:scaleX(0.982);">0,00</div>
<div class="t" style="left:985.15px;top:455.15px;font-size:8.9px;color:#1a1a1a;transform:scaleX(0.982);">0,00</div>
<div class="t" style="left:1045.95px;top:455.15px;font-size:8.9px;color:#1a1a1a;transform:scaleX(0.982);">0,00</div>
<div class="t" style="left:322.98px;top:470.31px;font-size:9px;font-weight:bold;color:#1a1a1a;transform:scaleX(0.983);-webkit-text-stroke:0;letter-spacing:0.1px">19 : 20</div>
<div class="t" style="left:388.05px;top:470.30px;font-size:8.9px;color:#1a1a1a;transform:scaleX(0.982);">0,00</div>
<div class="t" style="left:447.76px;top:470.30px;font-size:8.9px;color:#1a1a1a;transform:scaleX(0.982);">0,00</div>
<div class="t" style="left:507.47px;top:470.30px;font-size:8.9px;color:#1a1a1a;transform:scaleX(0.982);">0,00</div>
<div class="t" style="left:567.18px;top:470.30px;font-size:8.9px;color:#1a1a1a;transform:scaleX(0.982);">0,00</div>
<div class="t" style="left:626.89px;top:470.30px;font-size:8.9px;color:#1a1a1a;transform:scaleX(0.982);">0,00</div>
<div class="t" style="left:686.60px;top:470.30px;font-size:8.9px;color:#1a1a1a;transform:scaleX(0.982);">0,00</div>
<div class="t" style="left:746.31px;top:470.30px;font-size:8.9px;color:#1a1a1a;transform:scaleX(0.982);">0,00</div>
<div class="t" style="left:806.02px;top:470.30px;font-size:8.9px;color:#1a1a1a;transform:scaleX(0.982);">0,00</div>
<div class="t" style="left:865.73px;top:470.30px;font-size:8.9px;color:#1a1a1a;transform:scaleX(0.982);">0,00</div>
<div class="t" style="left:925.44px;top:470.30px;font-size:8.9px;color:#1a1a1a;transform:scaleX(0.982);">0,00</div>
<div class="t" style="left:985.15px;top:470.30px;font-size:8.9px;color:#1a1a1a;transform:scaleX(0.982);">0,00</div>
<div class="t" style="left:1045.95px;top:470.30px;font-size:8.9px;color:#1a1a1a;transform:scaleX(0.982);">0,00</div>
<div class="ab" style="left:1085.5px;top:162.5px;width:14px;height:323.5px;background:linear-gradient(90deg,#e6e6e6,#f6f6f6 50%,#eeeeee)"></div>
<div class="ab" style="left:1086.2px;top:163px;width:12.8px;height:14.5px;border:1.4px solid #4a9ad6;border-radius:1.5px;background:linear-gradient(#fdfdfd,#eaeaea)"></div>
<svg class="ab" style="left:1089.2px;top:167px;" width="7" height="5" viewBox="0 0 7 5"><path d="M0.8 4 L3.5 1.2 L6.2 4" stroke="#2a6ab0" stroke-width="1.3" fill="none"/></svg>
<div class="ab" style="left:1086.2px;top:177.8px;width:12.8px;height:292px;border:1.4px solid #4a9ad6;border-radius:1.5px;background:linear-gradient(90deg,#fafafa,#f4f4f4 50%,#dadada)"></div>
<div class="ab" style="left:1090.5px;top:291.5px;width:4.5px;height:1px;background:#7ab4e0"></div><div class="ab" style="left:1090.5px;top:293px;width:4.5px;height:1px;background:#7ab4e0"></div><div class="ab" style="left:1090.5px;top:295px;width:4.5px;height:1.3px;background:#3a90d0"></div>
<div class="ab" style="left:1086.2px;top:472.3px;width:12.8px;height:13.2px;border:1.4px solid #4a9ad6;border-radius:1.5px;background:linear-gradient(#fdfdfd,#eaeaea)"></div>
<svg class="ab" style="left:1089.2px;top:476px;" width="7" height="5" viewBox="0 0 7 5"><path d="M0.8 1 L3.5 3.8 L6.2 1" stroke="#2a6ab0" stroke-width="1.3" fill="none"/></svg>
<div class="ab" style="left:306.3px;top:542.5px;width:794.2px;height:33.0px;background:#fff;border:1px solid #d0d0d0"></div>
<div class="ab" style="left:372px;top:561.5px;width:1px;height:13px;background:#e4e4e4"></div>
<div class="ab" style="left:438px;top:561.5px;width:1px;height:13px;background:#e4e4e4"></div>
<div class="ab" style="left:504px;top:561.5px;width:1px;height:13px;background:#e4e4e4"></div>
<div class="ab" style="left:570px;top:561.5px;width:1px;height:13px;background:#e4e4e4"></div>
<div class="ab" style="left:635px;top:561.5px;width:1px;height:13px;background:#e4e4e4"></div>
<div class="ab" style="left:701px;top:561.5px;width:1px;height:13px;background:#e4e4e4"></div>
<div class="ab" style="left:767px;top:561.5px;width:1px;height:13px;background:#e4e4e4"></div>
<div class="ab" style="left:833px;top:561.5px;width:1px;height:13px;background:#e4e4e4"></div>
<div class="ab" style="left:899px;top:561.5px;width:1px;height:13px;background:#e4e4e4"></div>
<div class="ab" style="left:965px;top:561.5px;width:1px;height:13px;background:#e4e4e4"></div>
<div class="ab" style="left:1030px;top:561.5px;width:1px;height:13px;background:#e4e4e4"></div>
<div class="ab" style="left:306.90000000000003px;top:544.3px;width:792.5px;height:16.8px;background:linear-gradient(#fcfcfc,#f2f2f2 45%,#dcdcdc 95%);border:1.4px solid #4a9ad6;border-radius:1.5px"></div>
<div class="ab" style="left:372px;top:544.5px;width:1px;height:16.5px;background:#4a9ad6;box-shadow:0.5px 0 0 #9ccbec"></div>
<div class="ab" style="left:438px;top:544.5px;width:1px;height:16.5px;background:#4a9ad6;box-shadow:0.5px 0 0 #9ccbec"></div>
<div class="ab" style="left:504px;top:544.5px;width:1px;height:16.5px;background:#4a9ad6;box-shadow:0.5px 0 0 #9ccbec"></div>
<div class="ab" style="left:570px;top:544.5px;width:1px;height:16.5px;background:#4a9ad6;box-shadow:0.5px 0 0 #9ccbec"></div>
<div class="ab" style="left:635px;top:544.5px;width:1px;height:16.5px;background:#4a9ad6;box-shadow:0.5px 0 0 #9ccbec"></div>
<div class="ab" style="left:701px;top:544.5px;width:1px;height:16.5px;background:#4a9ad6;box-shadow:0.5px 0 0 #9ccbec"></div>
<div class="ab" style="left:767px;top:544.5px;width:1px;height:16.5px;background:#4a9ad6;box-shadow:0.5px 0 0 #9ccbec"></div>
<div class="ab" style="left:833px;top:544.5px;width:1px;height:16.5px;background:#4a9ad6;box-shadow:0.5px 0 0 #9ccbec"></div>
<div class="ab" style="left:899px;top:544.5px;width:1px;height:16.5px;background:#4a9ad6;box-shadow:0.5px 0 0 #9ccbec"></div>
<div class="ab" style="left:965px;top:544.5px;width:1px;height:16.5px;background:#4a9ad6;box-shadow:0.5px 0 0 #9ccbec"></div>
<div class="ab" style="left:1030px;top:544.5px;width:1px;height:16.5px;background:#4a9ad6;box-shadow:0.5px 0 0 #9ccbec"></div>
<div class="t" style="left:331.79px;top:548.75px;font-size:9px;color:#1a1a1a;transform:scaleX(0.910);">Gen</div>
<div class="t" style="left:331.02px;top:564.33px;font-size:8.9px;color:#1a1a1a;transform:scaleX(0.982);">1,00</div>
<div class="t" style="left:398.32px;top:548.75px;font-size:9px;color:#1a1a1a;transform:scaleX(0.910);">Feb</div>
<div class="t" style="left:396.87px;top:564.33px;font-size:8.9px;color:#1a1a1a;transform:scaleX(0.982);">1,00</div>
<div class="t" style="left:464.17px;top:548.75px;font-size:9px;color:#1a1a1a;transform:scaleX(0.910);">Mar</div>
<div class="t" style="left:462.72px;top:564.33px;font-size:8.9px;color:#1a1a1a;transform:scaleX(0.982);">1,00</div>
<div class="t" style="left:530.70px;top:548.75px;font-size:9px;color:#1a1a1a;transform:scaleX(0.910);">Apr</div>
<div class="t" style="left:528.57px;top:564.33px;font-size:8.9px;color:#1a1a1a;transform:scaleX(0.982);">1,00</div>
<div class="t" style="left:594.96px;top:548.75px;font-size:9px;color:#1a1a1a;transform:scaleX(0.910);">Mag</div>
<div class="t" style="left:594.42px;top:564.33px;font-size:8.9px;color:#1a1a1a;transform:scaleX(0.982);">1,00</div>
<div class="t" style="left:662.40px;top:548.75px;font-size:9px;color:#1a1a1a;transform:scaleX(0.910);">Giu</div>
<div class="t" style="left:660.27px;top:564.33px;font-size:8.9px;color:#1a1a1a;transform:scaleX(0.982);">1,00</div>
<div class="t" style="left:727.79px;top:548.75px;font-size:9px;color:#1a1a1a;transform:scaleX(0.910);">Lug</div>
<div class="t" style="left:726.12px;top:564.33px;font-size:8.9px;color:#1a1a1a;transform:scaleX(0.982);">1,00</div>
<div class="t" style="left:793.19px;top:548.75px;font-size:9px;color:#1a1a1a;transform:scaleX(0.910);">Ago</div>
<div class="t" style="left:791.97px;top:564.33px;font-size:8.9px;color:#1a1a1a;transform:scaleX(0.982);">1,00</div>
<div class="t" style="left:860.18px;top:548.75px;font-size:9px;color:#1a1a1a;transform:scaleX(0.910);">Set</div>
<div class="t" style="left:857.82px;top:564.33px;font-size:8.9px;color:#1a1a1a;transform:scaleX(0.982);">1,00</div>
<div class="t" style="left:926.71px;top:548.75px;font-size:9px;color:#1a1a1a;transform:scaleX(0.910);">Ott</div>
<div class="t" style="left:923.67px;top:564.33px;font-size:8.9px;color:#1a1a1a;transform:scaleX(0.982);">1,00</div>
<div class="t" style="left:990.74px;top:548.75px;font-size:9px;color:#1a1a1a;transform:scaleX(0.910);">Nov</div>
<div class="t" style="left:989.52px;top:564.33px;font-size:8.9px;color:#1a1a1a;transform:scaleX(0.982);">1,00</div>
<div class="t" style="left:1058.81px;top:548.75px;font-size:9px;color:#1a1a1a;transform:scaleX(0.910);">Dic</div>
<div class="t" style="left:1056.22px;top:564.33px;font-size:8.9px;color:#1a1a1a;transform:scaleX(0.982);">1,00</div>
</body></html>
